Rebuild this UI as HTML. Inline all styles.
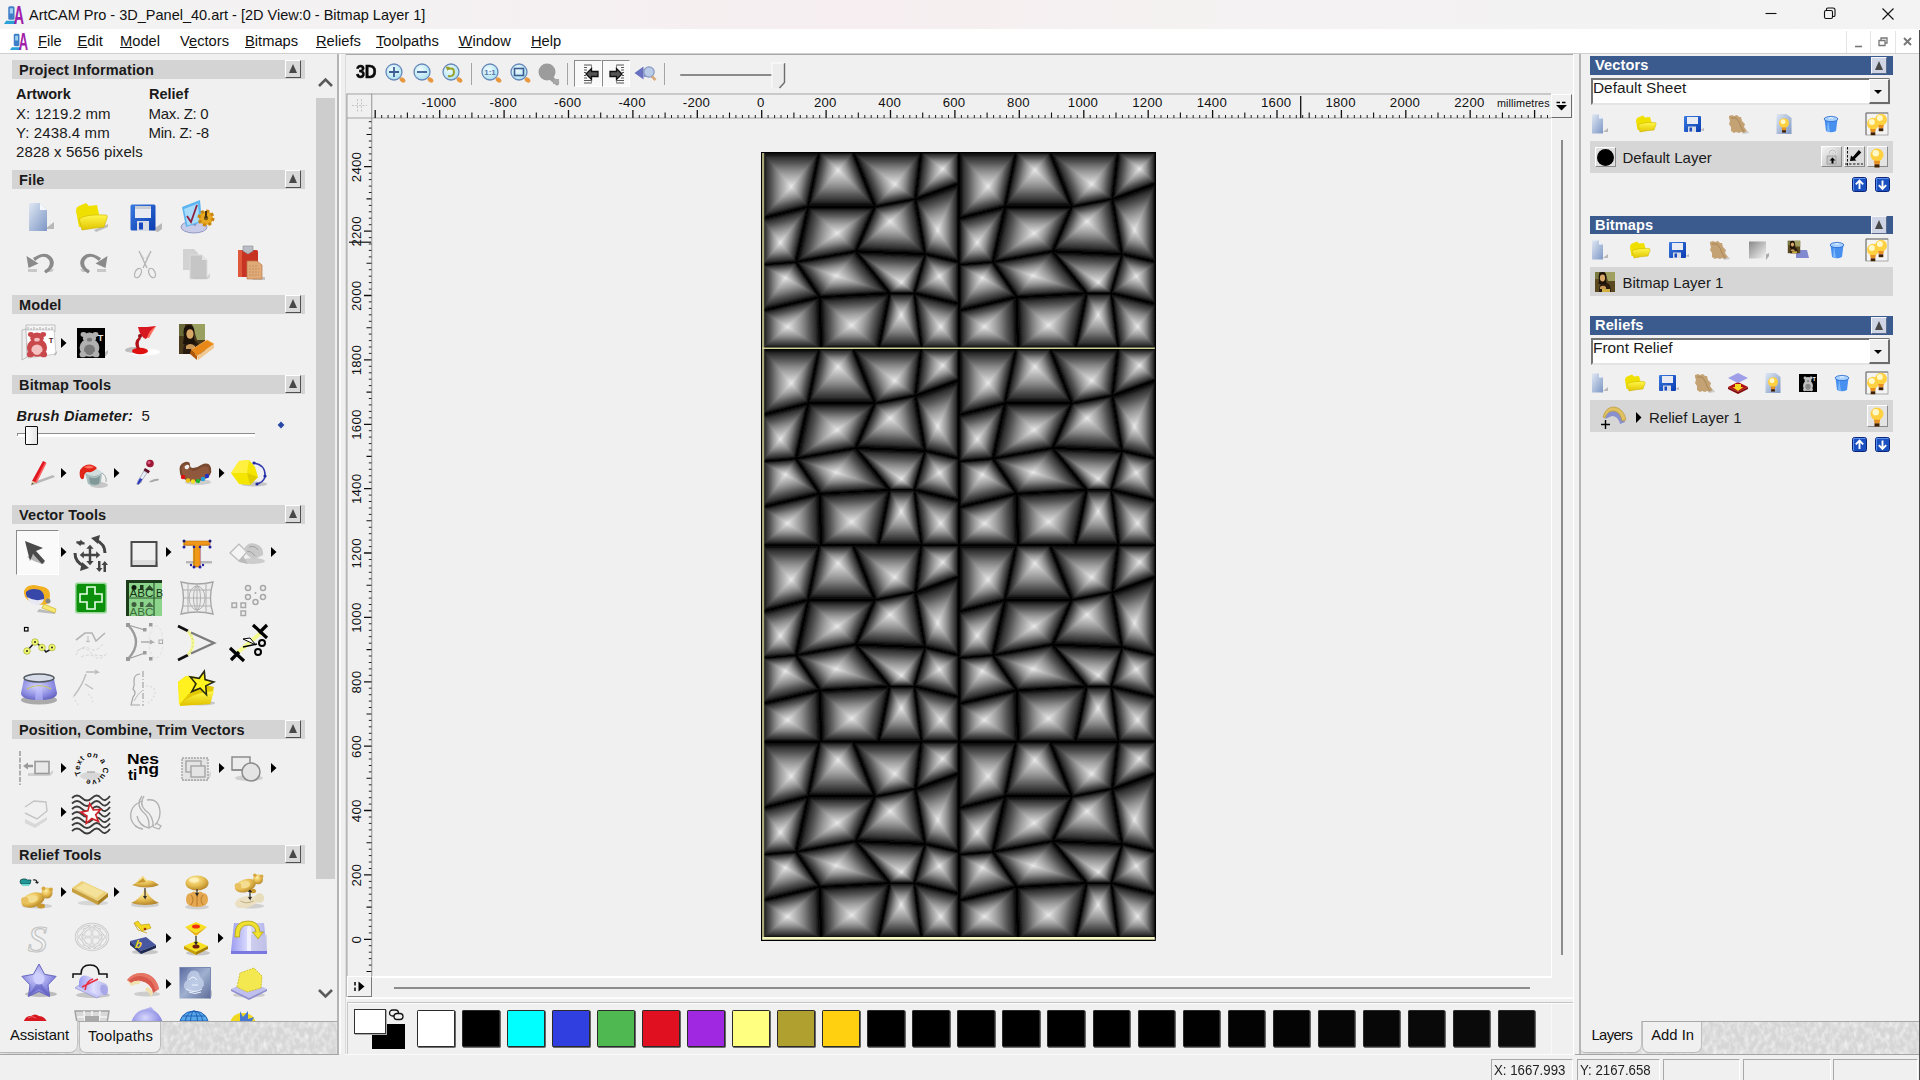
<!DOCTYPE html><html><head><meta charset="utf-8"><title>ArtCAM Pro - 3D_Panel_40.art</title><style>*{box-sizing:border-box;margin:0;padding:0}
html,body{width:1920px;height:1080px;overflow:hidden;background:#f0f0f0;font-family:"Liberation Sans",sans-serif;color:#1a1a1a}
.a{position:absolute}
.t{position:absolute;white-space:nowrap;line-height:1}
svg{position:absolute;overflow:visible}
.hd{position:absolute;left:12.3px;width:292.400px;height:18.500px;background:#d4d4d4}
.hd b{position:absolute;left:6.800px;top:2px;letter-spacing:.1px;font-size:14.5px;line-height:16px;color:#1a1a1a;white-space:nowrap}
.cb{position:absolute;width:16.4px;height:17.6px;background:#d9d9d9;border:1.4px solid;border-color:#fff #505050 #505050 #fff}
.cb:after{content:"";position:absolute;left:3px;top:3px;border:4.600px solid transparent;border-top:0;border-bottom:9.500px solid #484848}
.rh{position:absolute;left:1590px;width:303px;height:18.5px;background:#3b5b8e}
.rh b{position:absolute;left:5px;top:1px;letter-spacing:.1px;font-size:14.600px;line-height:16px;color:#fff;white-space:nowrap}
.row{position:absolute;left:1590px;width:303px;background:#d6d6d6}
.combo{position:absolute;left:1591px;width:298.5px;height:27px;background:#fff;border:2px solid;border-color:#747474 #e4e4e4 #e4e4e4 #747474}
.combo span{position:absolute;left:0px;top:0px;font-size:15.400px;line-height:16px;white-space:nowrap}
.combo i{position:absolute;right:-2px;top:-.5px;width:21px;height:25px;background:#f0f0f0;border:solid;border-width:1px 2px 2px 1px;border-color:#fff #6c6c6c #6c6c6c #fff}
.combo i:after{content:"";position:absolute;left:4.5px;top:10px;border:4.5px solid transparent;border-bottom:0;border-top:4.5px solid #000}
.sw{position:absolute;top:1010px;width:37.4px;height:37.2px;border:1.5px solid #2a2a2a;border-radius:1.2px;box-shadow:.8px .8px 0 #444}
.tri{position:absolute;width:0;height:0;border:4px solid transparent;border-right:0;border-left:5px solid #000}
.ud{position:absolute;width:15px;height:15px;background:#1a56c4;border:1px solid #0a2a80;border-radius:2px}

.rh .cb{background:#cfd5e4;border-color:#f4f6fa #5c6c8c #5c6c8c #f4f6fa}
</style></head><body>
<div class="a" style="left:0px;top:0px;width:1920px;height:29px;background:linear-gradient(90deg,#f3f3f3 0%,#f4f1f2 22%,#f6eef0 45%,#f4f2f2 65%,#f3f3f3 100%)"></div>
<div class="t " style="left:29px;top:7.53px;font-size:14.5px;color:#111">ArtCAM Pro - 3D_Panel_40.art - [2D View:0 - Bitmap Layer 1]</div>
<div class="a" style="left:0px;top:29px;width:1920px;height:24px;background:#fff"></div>
<div class="a" style="left:0px;top:53px;width:1920px;height:1px;background:#cfcfcf"></div>
<div class="t mn" style="left:38px;top:34.06px;font-size:14.7px;color:#111"><u>F</u>ile</div>
<div class="t mn" style="left:77.5px;top:34.06px;font-size:14.7px;color:#111"><u>E</u>dit</div>
<div class="t mn" style="left:120px;top:34.06px;font-size:14.7px;color:#111"><u>M</u>odel</div>
<div class="t mn" style="left:180px;top:34.06px;font-size:14.7px;color:#111">V<u>e</u>ctors</div>
<div class="t mn" style="left:245px;top:34.06px;font-size:14.7px;color:#111"><u>B</u>itmaps</div>
<div class="t mn" style="left:316px;top:34.06px;font-size:14.7px;color:#111"><u>R</u>eliefs</div>
<div class="t mn" style="left:376px;top:34.06px;font-size:14.7px;color:#111"><u>T</u>oolpaths</div>
<div class="t mn" style="left:458.5px;top:34.06px;font-size:14.7px;color:#111"><u>W</u>indow</div>
<div class="t mn" style="left:531px;top:34.06px;font-size:14.7px;color:#111"><u>H</u>elp</div>
<svg style="left:1750px;top:0" width="170" height="29" viewBox="0 0 170 29"><g stroke="#111" stroke-width="1.1" fill="none"><path d="M15.5 13.5h11"/><rect x="74.5" y="10.5" width="8" height="8" rx="1.5"/><path d="M76.5 10.5v-1.2a1.3 1.3 0 0 1 1.3-1.3h5.4a1.8 1.8 0 0 1 1.8 1.8v5.4a1.3 1.3 0 0 1-1.3 1.3h-1.2"/><path d="M132.5 8.5l11 11m0-11l-11 11"/></g></svg>
<div class="a" style="left:1846px;top:31px;width:74px;height:22px;background:#fff"></div>
<div class="a" style="left:1846px;top:31px;width:1px;height:22px;background:#e4e4e4"></div>
<div class="a" style="left:1870px;top:31px;width:1px;height:22px;background:#e4e4e4"></div>
<div class="a" style="left:1895px;top:31px;width:1px;height:22px;background:#e4e4e4"></div>
<svg style="left:1846px;top:31px" width="74" height="22" viewBox="0 0 74 22"><g stroke="#777" stroke-width="1.6" fill="none"><path d="M9 15.5h7"/><path d="M33 9.5h6v5h-6z M35 9.5v-2.500h6v5h-2" stroke-width="1.3"/><path d="M58 7l7 7m0-7l-7 7" stroke-width="1.9"/></g></svg>
<svg style="left:3px;top:3px" width="21.0" height="23.1" viewBox="0 0 20 22"><path d="M3 17h9l1 3H1z" fill="#2aa0d8"/><rect x="5" y="3" width="6" height="13" rx="1.5" fill="#3f7fc8"/><rect x="6.5" y="5" width="3" height="5" fill="#9fd0f0"/><text x="10.300" y="20" font-family="Liberation Sans,sans-serif" font-weight="bold" font-size="25" fill="#a020a8" textLength="9.800" lengthAdjust="spacingAndGlyphs">A</text></svg>
<svg style="left:9px;top:31px" width="19.0" height="20.9" viewBox="0 0 20 22"><path d="M3 17h9l1 3H1z" fill="#2aa0d8"/><rect x="5" y="3" width="6" height="13" rx="1.5" fill="#3f7fc8"/><rect x="6.5" y="5" width="3" height="5" fill="#9fd0f0"/><text x="10.300" y="20" font-family="Liberation Sans,sans-serif" font-weight="bold" font-size="25" fill="#a020a8" textLength="9.800" lengthAdjust="spacingAndGlyphs">A</text></svg>
<div class="a" id="lp" style="left:0;top:54px;width:337px;height:967px;overflow:hidden">
<div class="hd" style="top:6.100000000000001px"><b>Project Information</b><span class="cb" style="left:272.500px;top:0"></span></div>
<div class="hd" style="top:116.1px"><b>File</b><span class="cb" style="left:272.500px;top:0"></span></div>
<div class="hd" style="top:241.10000000000002px"><b>Model</b><span class="cb" style="left:272.500px;top:0"></span></div>
<div class="hd" style="top:321.3px"><b>Bitmap Tools</b><span class="cb" style="left:272.500px;top:0"></span></div>
<div class="hd" style="top:451.3px"><b>Vector Tools</b><span class="cb" style="left:272.500px;top:0"></span></div>
<div class="hd" style="top:666.3px"><b>Position, Combine, Trim Vectors</b><span class="cb" style="left:272.500px;top:0"></span></div>
<div class="hd" style="top:791.3px"><b>Relief Tools</b><span class="cb" style="left:272.500px;top:0"></span></div>
<div class="t " style="left:16px;top:33.43px;font-size:14.5px;font-weight:bold">Artwork</div>
<div class="t " style="left:149px;top:33.43px;font-size:14.5px;font-weight:bold">Relief</div>
<div class="t " style="left:16px;top:51.90px;font-size:15px;letter-spacing:.1px">X: 1219.2 mm</div>
<div class="t " style="left:16px;top:70.70px;font-size:15px;letter-spacing:.1px">Y: 2438.4 mm</div>
<div class="t " style="left:16px;top:89.50px;font-size:15px;letter-spacing:.1px">2828 x 5656 pixels</div>
<div class="t " style="left:148.5px;top:51.90px;font-size:15px;letter-spacing:-.3px">Max. Z: 0</div>
<div class="t " style="left:148.5px;top:70.70px;font-size:15px;letter-spacing:-.3px">Min. Z: -8</div>
<div class="t " style="left:16.5px;top:354.73px;font-size:14.5px;font-weight:bold;font-style:italic;letter-spacing:.25px">Brush Diameter:</div>
<div class="t " style="left:141.5px;top:354.30px;font-size:15px;">5</div>
<div class="a" style="left:17px;top:379px;width:238px;height:1px;background:#8c8c8c"></div>
<div class="a" style="left:17px;top:380px;width:238px;height:3px;background:#fff"></div>
<div class="a" style="left:17px;top:379px;width:1px;height:3px;background:#8c8c8c"></div>
<div class="a" style="left:25px;top:371.5px;width:12.5px;height:19px;background:linear-gradient(90deg,#fff,#e4e4e4);border:1.5px solid #111;border-radius:1px"></div>
<div class="a" style="left:277.5px;top:367.5px;width:6px;height:6px;background:#2848a8;transform:rotate(45deg) scale(.8)"></div>
<svg width="0" height="0" style="left:0;top:0"><defs>
<linearGradient id="gDoc" x1="0" y1="0" x2="1" y2="1"><stop offset="0" stop-color="#dfe7f3"/><stop offset="1" stop-color="#7d97c5"/></linearGradient>
<linearGradient id="gYel" x1="0" y1="0" x2="0" y2="1"><stop offset="0" stop-color="#fff84a"/><stop offset="1" stop-color="#e2c400"/></linearGradient>
<radialGradient id="gGold" cx=".4" cy=".3" r=".8"><stop offset="0" stop-color="#fff0a8"/><stop offset=".5" stop-color="#e6bc50"/><stop offset="1" stop-color="#a87820"/></radialGradient>
<radialGradient id="gLav" cx=".45" cy=".35" r=".8"><stop offset="0" stop-color="#d8d8ff"/><stop offset=".6" stop-color="#8888e0"/><stop offset="1" stop-color="#5050b0"/></radialGradient>
<linearGradient id="gLavL" x1="0" y1="0" x2="1" y2="0"><stop offset="0" stop-color="#9c9cf0"/><stop offset=".5" stop-color="#e0e0ff"/><stop offset="1" stop-color="#b0b0e8"/></linearGradient>
<radialGradient id="gSh" cx=".5" cy=".5" r=".5"><stop offset="0" stop-color="#777" stop-opacity=".7"/><stop offset="1" stop-color="#999" stop-opacity="0"/></radialGradient>
<linearGradient id="gSave" x1="0" y1="0" x2="1" y2="1"><stop offset="0" stop-color="#3a7ae0"/><stop offset="1" stop-color="#0a3cb0"/></linearGradient>
</defs></svg>
<svg style="left:19.0px;top:140.5px" width="44" height="44" viewBox="-22 -22 44 44"><path d="M4 12l9-7v7z" fill="#b8b8b8"/><path d="M-12-14h11l7 7v21h-18z" fill="url(#gDoc)"/><path d="M-1-14l7 7h-7z" fill="#f4f7fc"/></svg>
<svg style="left:70.0px;top:141.0px" width="44" height="44" viewBox="-22 -22 44 44"><path d="M2 13l14-6v3l-12 5z" fill="#bdbdbd"/><path d="M-16-6q0-4 3-5l7-3 3 3 8-1 2 9-3 13h-17z" fill="#f0e000"/><path d="M-13 2q6-5 27-4 2 0 1 3l-3 9q-10 1-22 3z" fill="url(#gYel)" stroke="#c8b000" stroke-width=".6"/></svg>
<svg style="left:124.0px;top:142.0px" width="44" height="44" viewBox="-22 -22 44 44"><path d="M6 12l10-7v6l-4 3z" fill="#b8b8b8"/><rect x="-15.500" y="-13.500" width="25" height="26" rx="1.500" fill="url(#gSave)"/><rect x="-11" y="-12" width="16" height="12" fill="#e8ecf2"/><rect x="-11" y="-12" width="16" height="3" fill="#c8ccd4"/><rect x="-9" y="3" width="12" height="10" fill="#d8dce4"/><rect x="-7" y="4.500" width="4" height="7" fill="#1848c0"/></svg>
<svg style="left:175.0px;top:141.0px" width="44" height="44" viewBox="-22 -22 44 44"><ellipse cx="-3" cy="10" rx="13" ry="6" fill="#c8cce8" stroke="#8088b8" stroke-width=".8"/><path d="M-5 8l4 1 3-14-4-1z" fill="#8890c0"/><path d="M-15-10l18-7 2 22-16 5z" fill="#5db4f0"/><path d="M-13-8l14-5.500 1.500 18-12 4z" fill="#a8dcfa"/><path d="M-10-1l4 6 6-17" fill="none" stroke="#902040" stroke-width="1.800"/><circle cx="9" cy="1" r="7" fill="#e8a820"/><circle cx="9" cy="1" r="7" fill="none" stroke="#c88410" stroke-width="3" stroke-dasharray="3 2.500"/><circle cx="9" cy="1" r="2.200" fill="#7a5a10"/><path d="M8-6h2v7h-2z" fill="#403010"/></svg>
<svg style="left:18.5px;top:187.0px" width="44" height="44" viewBox="-22 -22 44 44"><path d="M-13 6h9v3h-9z M4 6h9l-2 3h-7z" fill="#c8c8c8"/><path d="M-6-2q9-8 14-1 3 6-5 11l2 2.500q11-7 6.500-15-6-9-19.500-.5z" fill="#8a8a8a"/><path d="M-14.500-7l2 12 10-4.500z" fill="#8a8a8a"/></svg>
<svg style="left:70.5px;top:187.0px" width="44" height="44" viewBox="-22 -22 44 44"><g transform="scale(-1,1)"><path d="M-13 6h9v3h-9z M4 6h9l-2 3h-7z" fill="#c8c8c8"/><path d="M-6-2q9-8 14-1 3 6-5 11l2 2.500q11-7 6.500-15-6-9-19.500-.5z" fill="#8a8a8a"/><path d="M-14.500-7l2 12 10-4.500z" fill="#8a8a8a"/></g></svg>
<svg style="left:122.5px;top:187.5px" width="44" height="44" viewBox="-22 -22 44 44"><g fill="none" stroke="#b4b4b4" stroke-width="1.300"><path d="M-6-13l8 17M6-13l-8 17"/><ellipse cx="-7" cy="9" rx="3" ry="5" transform="rotate(25 -7 9)"/><ellipse cx="7" cy="9" rx="3" ry="5" transform="rotate(-25 7 9)"/></g><path d="M-5.500-13l4 9 .8-1.500z M5.500-13l-4 9-.8-1.500z" fill="#c8c8c8"/></svg>
<svg style="left:175.0px;top:186.5px" width="44" height="44" viewBox="-22 -22 44 44"><path d="M-14-14h11l4 4v17h-15z" fill="#d2d2d2"/><path d="M-7-8h12l5 5v19h-17z" fill="#c6c6c6" stroke="#dcdcdc" stroke-width="1"/><path d="M5-8l5 5h-5z" fill="#e4e4e4"/><path d="M-5 14h15l3-4v4l-2 2h-14z" fill="#c0c0c0" opacity=".6"/></svg>
<svg style="left:229.0px;top:186.5px" width="44" height="44" viewBox="-22 -22 44 44"><path d="M0 14h14v3h-12z" fill="#b0b0b0" opacity=".7"/><rect x="-13" y="-13" width="20" height="27" rx="1.500" fill="#c83424"/><path d="M-13-13h4v27h-4z" fill="#e0583c"/><path d="M-8-17h10v5l-5 3-5-3z" fill="#b8bcc4" stroke="#8a8e96" stroke-width=".6"/><path d="M-4-2h10l5 4v14h-15z" fill="#e0aa78"/><path d="M-4-2h10l5 4v14h-15z" fill="none" stroke="#b87848" stroke-width=".7"/><path d="M-2 3h8m-8 3h10m-10 3h10m-10 3h10" stroke="#c08858" stroke-width=".8" stroke-dasharray="2 1"/></svg>
<svg style="left:15.5px;top:266.0px" width="44" height="44" viewBox="-22 -22 44 44"><path d="M-12-17h29v7h-29z" fill="#f4f4f4" stroke="#aaa" stroke-width=".7"/><path d="M-10-12v-3m3 3v-2m3 2v-3m3 3v-2m3 2v-3m3 3v-2m3 2v-3m3 3v-2m3 2v-3" stroke="#888" stroke-width=".7"/><path d="M-16-12l4-1 1 28-5 3z" fill="#eee" stroke="#aaa" stroke-width=".7"/><path d="M-12-12h28l2 24-28 4z" fill="#fff" stroke="#bbb" stroke-width=".7"/><path d="M16 12l3-3v2l-2 3z" fill="#bbb"/><g transform="translate(-1,1) scale(1.120,.95)"><circle cx="-5.500" cy="-9" r="2.600" fill="#c8484c"/><circle cx="5.500" cy="-9" r="2.600" fill="#c8484c"/><circle cx="0" cy="-5" r="6" fill="#c8484c"/><ellipse cx="0" cy="5" rx="9" ry="9.500" fill="#c8484c"/><ellipse cx="0" cy="7" rx="5" ry="5.500" fill="#f4c0c0"/><circle cx="-6" cy="12" r="3" fill="#c8484c"/><circle cx="6" cy="12" r="3" fill="#c8484c"/><ellipse cx="0" cy="-3.500" rx="2.500" ry="2" fill="#f4c0c0"/></g><text x="10.800" y="0.500" font-family="Liberation Sans,sans-serif" font-weight="bold" font-size="7.500" fill="#5a2020">T</text></svg>
<svg style="left:61px;top:284.0px" width="6" height="10" viewBox="0 0 6 10"><path d="M0 0l5.500 5L0 10z" fill="#000"/></svg>
<svg style="left:69.0px;top:266.5px" width="44" height="44" viewBox="-22 -22 44 44"><path d="M13 10l4-3v3l-3 4z" fill="#bbb"/><rect x="-14" y="-15" width="28" height="30" fill="#000"/><g transform="translate(-1.500,0) scale(1.100,.95)"><circle cx="-5.500" cy="-9" r="2.600" fill="#b0b0b0"/><circle cx="5.500" cy="-9" r="2.600" fill="#b0b0b0"/><circle cx="0" cy="-5" r="6" fill="#b0b0b0"/><ellipse cx="0" cy="5" rx="9" ry="9.500" fill="#b0b0b0"/><ellipse cx="0" cy="7" rx="5" ry="5.500" fill="#787878"/><circle cx="-6" cy="12" r="3" fill="#b0b0b0"/><circle cx="6" cy="12" r="3" fill="#b0b0b0"/><ellipse cx="0" cy="-3.500" rx="2.500" ry="2" fill="#787878"/></g><text x="6.800" y="-2.500" font-family="Liberation Sans,sans-serif" font-weight="bold" font-size="9" fill="#e8e8e8">T</text></svg>
<svg style="left:120.0px;top:264.0px" width="44" height="44" viewBox="-22 -22 44 44"><ellipse cx="2" cy="12" rx="16" ry="3.500" fill="#fff" opacity=".9"/><ellipse cx="-8" cy="10" rx="9" ry="3" fill="#888" opacity=".5"/><ellipse cx="-2" cy="11" rx="8" ry="3.200" fill="#e01010"/><path d="M-5 9q-4-7 2-12l2 1.500q-4 4-1 10z" fill="#b01018"/><path d="M-4-13l9 0 9-1-10 13q-6-2-8-12z" fill="#d81820"/><path d="M5-2q2-8 9-12l-7 12z" fill="#ff7060"/><circle cx="-2" cy="-4" r="2" fill="#901018"/></svg>
<svg style="left:174.0px;top:266.0px" width="44" height="44" viewBox="-22 -22 44 44"><rect x="-17" y="-18" width="26" height="30" fill="#4a3a1c"/><path d="M-4-18h13v16h-8z" fill="#9aa060"/><path d="M-17-18h6v12h-6z" fill="#6a6a38"/><path d="M-13 12q0-12 5-14 2-1 6 0 6 2 6 14z" fill="#2a1c10"/><path d="M-12-5q-2-12 5-12 7 0 5 12l1 7h-12z" fill="#1c1208"/><ellipse cx="-6" cy="-8" rx="3.600" ry="4.800" fill="#d8a868"/><path d="M-10 4q4-4 9 0v3h-9z" fill="#c89858"/><path d="M-5 8l16-10 7 4-17 12z" fill="#e88818"/><path d="M-5 8l6 6v4l-7-6z" fill="#b05808"/><path d="M1 14l17-12v4l-16 12z" fill="#f0c890"/><path d="M-5 8l16-10 7 4" fill="none" stroke="#f8b050" stroke-width=".8"/></svg>
<svg style="left:20.0px;top:397.0px" width="44" height="44" viewBox="-22 -22 44 44"><path d="M-11 10l22-8 2 2-22 8z" fill="#b8b8b8"/><path d="M-10 8l11-20 3 1.500-10 20z" fill="#e01820"/><path d="M-7 9.500l10-20 1.500.7-10 20z" fill="#ff6060"/><path d="M-10 8l4 1.500-5 3z" fill="#d8c090"/><path d="M-11 12.500l1.500-2.500 1 .5z" fill="#333"/></svg>
<svg style="left:61px;top:414.0px" width="6" height="10" viewBox="0 0 6 10"><path d="M0 0l5.500 5L0 10z" fill="#000"/></svg>
<svg style="left:71.0px;top:399.0px" width="44" height="44" viewBox="-22 -22 44 44"><ellipse cx="6" cy="10" rx="9" ry="3" fill="#aaa" opacity=".6"/><path d="M-8-2q10-8 17 0l-1 10q-6 5-13 1z" fill="#a8bcbc"/><path d="M-8-2q10-8 17 0-8 6-17 0z" fill="#d0dede"/><path d="M-3 8q3 3 9 1l1-8q-5 4-11 1z" fill="#809898"/><path d="M-13 2q-2-9 6-12 6-2 11 3-4 5-10 4-3 1-3 6-2 3-4-1z" fill="#e02418"/><path d="M-9-8q5-3 10 0-5 3-10 0z" fill="#ff7060"/><path d="M9-2q5 3 4 9" fill="none" stroke="#9aa" stroke-width="1"/></svg>
<svg style="left:113.5px;top:414.0px" width="6" height="10" viewBox="0 0 6 10"><path d="M0 0l5.500 5L0 10z" fill="#000"/></svg>
<svg style="left:125.0px;top:397.0px" width="44" height="44" viewBox="-22 -22 44 44"><path d="M3 8q5-3 9-2 0 2-4 2-3 2-6 1z" fill="#aaa"/><path d="M-11 11l5-3 1 1-4 3z" fill="#999"/><circle cx="3" cy="-9.500" r="3.800" fill="#a01838"/><circle cx="2" cy="-10.500" r="1.500" fill="#d86080"/><path d="M-2-5l5 3-1.500 2.500-5-3z" fill="#601028"/><path d="M-3-2l3 2-7 10-2.500-1.500z" fill="#e8eef8" stroke="#889" stroke-width=".6"/><path d="M-7 5l2.500 1.500-4 5-1.500-1z" fill="#2838c0"/></svg>
<svg style="left:173.0px;top:397.0px" width="44" height="44" viewBox="-22 -22 44 44"><ellipse cx="3" cy="9" rx="13" ry="3" fill="#aaa" opacity=".5"/><path d="M-15 0q-2-9 5-11 5-1 5 3 0 3 3 3 4 0 8-3 8-4 10 3 2 8-8 12-12 4-19-1-4-3-4-6z" fill="#7a4a30"/><path d="M-13-1q-1-7 4-8 3 0 3 3 1 4 5 4 4-1 8-4 6-2 7 3 1 6-7 9-11 3-17-1-3-3-3-6z" fill="#90583c"/><ellipse cx="-8" cy="-6" rx="2.500" ry="2" fill="#f0f0f0" transform="rotate(-30 -8 -6)"/><circle cx="-12" cy="4" r="2.200" fill="#e01010"/><circle cx="-7" cy="7.500" r="2.200" fill="#f0c010"/><circle cx="-2" cy="8.500" r="2.200" fill="#f0e020"/><circle cx="3" cy="8" r="2.200" fill="#20b030"/><circle cx="8" cy="6" r="2.200" fill="#20a0e0"/><circle cx="12" cy="3" r="2.200" fill="#2030c0"/></svg>
<svg style="left:218.5px;top:414.0px" width="6" height="10" viewBox="0 0 6 10"><path d="M0 0l5.500 5L0 10z" fill="#000"/></svg>
<svg style="left:227.0px;top:396.5px" width="44" height="44" viewBox="-22 -22 44 44"><ellipse cx="5" cy="11" rx="13" ry="2.500" fill="#aaa" opacity=".6"/><path d="M5-10q12 2 11 14-2 6-9 7" fill="none" stroke="#3038b0" stroke-width="1.500"/><circle cx="5" cy="-10" r="1.600" fill="#2028a0"/><circle cx="16" cy="3" r="1.600" fill="#2028a0"/><circle cx="8" cy="11" r="1.600" fill="#2028a0"/><path d="M-18 0l8-12 10-1 6 7 3 10-8 8-11-1z" fill="#f4e600"/><path d="M-18 0l8-12 10-1-2 13z" fill="#fff040"/><path d="M-2 0l11 4-8 8z" fill="#e0cc00"/></svg>
<div class="a" style="left:16px;top:476px;width:43px;height:45px;background:#fafafa;border:1px solid;border-color:#8a8a8a #fff #fff #8a8a8a"></div>
<svg style="left:14.0px;top:476.0px" width="44" height="44" viewBox="-22 -22 44 44"><path d="M-9 5l8-3 2 4 8 5-3 1-8-3z" fill="#b4b4b4"/><path d="M-11-11l18 7-7 3 9 10-3 3-9-10-3 7z" fill="#4a4a4a"/></svg>
<svg style="left:61px;top:493.0px" width="6" height="10" viewBox="0 0 6 10"><path d="M0 0l5.500 5L0 10z" fill="#000"/></svg>
<svg style="left:68.0px;top:477.0px" width="44" height="44" viewBox="-22 -22 44 44"><g fill="none" stroke="#444" stroke-width="3"><path d="M6-13q9 4 9 13"/><path d="M-15 0q0 9 9 13"/></g><path d="M1-15l9-3-2 9z" fill="#444"/><path d="M-1 15l-9 3 2-9z" fill="#444"/><g fill="#444"><path d="M-2-11l5 0 0-2 4 3.500-4 3.500v-2h-5z" transform="translate(-12,-3) scale(.8)"/><path d="M-2-11l5 0 0-2 4 3.500-4 3.500v-2h-5z" transform="translate(-7,-2) scale(-.8,.8)"/><path d="M0-12l4.500 5h-3v6h6v-3l5 4.500-5 4.500v-3h-6v6h3l-4.500 5-4.500-5h3v-6h-6v3l-5-4.500 5-4.500v3h6v-6h-3z" transform="translate(0,1.500) scale(.82)"/><path d="M8 8h2.500v7h2l-3.200 4-3.300-4h2z M13.500 19h2.500v-7h2l-3.200-4-3.300 4h2z"/></g></svg>
<svg style="left:121.5px;top:477.5px" width="44" height="44" viewBox="-22 -22 44 44"><path d="M-10 8h24v5h-24z" fill="#c4c4c4"/><rect x="-12.500" y="-12" width="25" height="24" fill="none" stroke="#4a4a4a" stroke-width="2"/><path d="M-11 6h22v5h-22z" fill="#dcdcdc"/></svg>
<svg style="left:166px;top:493.0px" width="6" height="10" viewBox="0 0 6 10"><path d="M0 0l5.500 5L0 10z" fill="#000"/></svg>
<svg style="left:175.0px;top:477.7px" width="44" height="44" viewBox="-22 -22 44 44"><path d="M-11 7h26v2.500h-26z" fill="#b8b8b8"/><text x="0" y="13" text-anchor="middle" font-family="Liberation Sans,sans-serif" font-weight="bold" font-size="36.500" fill="#f09818" stroke="#b86808" stroke-width=".7" textLength="27" lengthAdjust="spacingAndGlyphs">T</text><g fill="#2020a0"><circle cx="-13" cy="-13" r="1.500"/><circle cx="13" cy="-13" r="1.500"/><circle cx="-13" cy="-7" r="1.500"/><circle cx="13" cy="-7" r="1.500"/><circle cx="-3" cy="-7" r="1.300"/><circle cx="3" cy="-7" r="1.300"/><circle cx="-3" cy="13" r="1.500"/><circle cx="3" cy="13" r="1.500"/><circle cx="-6" cy="11" r="1.200"/><circle cx="6" cy="11" r="1.200"/></g><g fill="#111"><circle cx="-13" cy="-13" r=".8"/><circle cx="13" cy="-13" r=".8"/></g></svg>
<svg style="left:224.6px;top:476.8px" width="44" height="44" viewBox="-22 -22 44 44"><ellipse cx="6" cy="8" rx="12" ry="3" fill="#ccc"/><path d="M-17 0l9-9 8 8-8 9z" fill="#f4f4f4" stroke="#b8b8b8" stroke-width="1.200"/><path d="M-3-4q4-8 12-5 8 3 7 11l-8 4q-8-1-11-10z" fill="#c8c8c8"/><path d="M2-6q6-2 9 3M0-2q5 0 8 5" stroke="#a0a0a0" fill="none"/><path d="M-4 3l5 8-9-2z" fill="#bbb"/></svg>
<svg style="left:271px;top:493.0px" width="6" height="10" viewBox="0 0 6 10"><path d="M0 0l5.500 5L0 10z" fill="#000"/></svg>
<svg style="left:16.8px;top:522.7px" width="44" height="44" viewBox="-22 -22 44 44"><path d="M0 10l16 3v2l-18-2z" fill="#bbb"/><path d="M-15-8q2-6 10-6l10 2q6 2 6 8l-1 8q-8 4-18-1-8-4-7-11z" fill="#f0b020"/><path d="M-13-7q5-5 14-2 5 3 4 10-6 3-13 0-6-3-5-8z" fill="#3848a8"/><path d="M-12-2q8 5 17 2-1 5-6 6-8 0-11-8z" fill="#e8e8f4"/><path d="M5 5l12 5-1 4-13-5z" fill="#f8e870" stroke="#c8a820" stroke-width=".6"/><circle cx="9" cy="2" r="2.500" fill="#888"/></svg>
<svg style="left:69.0px;top:521.6px" width="44" height="44" viewBox="-22 -22 44 44"><rect x="-16" y="-15.500" width="32" height="31" rx="2.500" fill="#98d898"/><rect x="-14.500" y="-14" width="29" height="28" rx="2" fill="#0c900c"/><path d="M-4-11h8v7h7v8h-7v7h-8v-7h-7v-8h7z" fill="none" stroke="#e8ffe8" stroke-width="1.600"/></svg>
<svg style="left:122.0px;top:522.0px" width="44" height="44" viewBox="-22 -22 44 44"><rect x="-18" y="-18" width="36" height="36" fill="#8cd48c"/><path d="M-18-18h36v3h-33v33h-3z" fill="#1c3c1c"/><path d="M-15 0h33M10-15v33" stroke="#2c5c2c" stroke-width="1.200"/><circle cx="-10" cy="-10.500" r="2.500" fill="#0c1c0c"/><rect x="-4" y="-13" width="3.500" height="5" fill="#1c3c1c"/><path d="M1-8l4.500-5 4.500 5z" fill="#2c4c2c"/><text x="-14.500" y="-1.500" font-family="Liberation Sans,sans-serif" font-size="10.500" fill="#143414" textLength="24" lengthAdjust="spacingAndGlyphs">ABC</text><circle cx="-10" cy="6.500" r="2.500" fill="#3c5c3c"/><rect x="-4" y="4" width="3.500" height="5" fill="#3c5c3c"/><path d="M1 9l4.500-5 4.500 5z" fill="#4c6c4c"/><text x="-14.500" y="18" font-family="Liberation Sans,sans-serif" font-size="10.500" fill="#3c6c3c" textLength="24" lengthAdjust="spacingAndGlyphs">ABC</text><text x="12" y="-1.500" font-family="Liberation Sans,sans-serif" font-size="10.500" fill="#143414">B</text></svg>
<svg style="left:174.7px;top:521.6px" width="44" height="44" viewBox="-22 -22 44 44"><path d="M-16-16q16 4 32 0-5 16 0 32-16-4-32 0 5-16 0-32z" fill="#ececec" stroke="#a4a4a4" stroke-width="1.300"/><g fill="none" stroke="#b0b0b0" stroke-width="1"><ellipse cx="0" cy="0" rx="8" ry="12"/><ellipse cx="0" cy="0" rx="3.500" ry="12"/><path d="M-14-8h28M-13 0h26M-14 8h28M-9-15v30M9-15v30M0-14v28"/></g></svg>
<svg style="left:226.7px;top:524.0px" width="44" height="44" viewBox="-22 -22 44 44"><g fill="none" stroke="#a8a8a8" stroke-width="1.500"><rect x="-17" y="3" width="4.500" height="4.500"/><rect x="-8" y="3" width="4.500" height="4.500"/><rect x="-8" y="11" width="4.500" height="4.500"/><circle cx="-1" cy="-12" r="2.500"/><circle cx="14" cy="-12" r="2.500"/><circle cx="-1" cy="-3" r="2.500"/><circle cx="14" cy="-3" r="2.500"/><circle cx="6.500" cy="2" r="2.500"/></g><circle cx="6.500" cy="-7" r="1" fill="#a8a8a8"/></svg>
<svg style="left:18.0px;top:566.0px" width="44" height="44" viewBox="-22 -22 44 44"><rect x="-15.500" y="-14.500" width="3.500" height="3.500" fill="#fff" stroke="#000" stroke-width="1.200"/><path d="M-13 9l8-9 7 5 4 5 7-4" fill="none" stroke="#222" stroke-width="1.600"/><g fill="#f0f870" stroke="#a8b030" stroke-width=".7"><circle cx="-13" cy="9" r="3.300"/><circle cx="-5" cy="0" r="3.300"/><circle cx="2" cy="5.500" r="3.300"/><circle cx="12" cy="5.500" r="3.300"/></g><g fill="#222"><circle cx="-13" cy="9" r="1"/><circle cx="-5" cy="0" r="1"/><circle cx="2" cy="5.500" r="1"/><circle cx="12" cy="5.500" r="1"/></g></svg>
<svg style="left:69.0px;top:569.0px" width="44" height="44" viewBox="-22 -22 44 44"><path d="M-15-5l9-7 7 0 4 8 9-8" fill="none" stroke="#b4b4b4" stroke-width="1.600"/><path d="M-3-9v6l-2-1m2 1l2-1" stroke="#bbb" fill="none"/><g fill="none" stroke="#d4d4d4" stroke-width="1" stroke-dasharray="3 2"><path d="M-15 10q6-12 14-6 6 4 14-6"/><path d="M-14 6q8-6 14 2 6 4 14 2"/><path d="M-10 12q8-4 14 0t12-4"/></g></svg>
<svg style="left:121.5px;top:566.0px" width="44" height="44" viewBox="-22 -22 44 44"><ellipse cx="12" cy="0" rx="7" ry="16" fill="none" stroke="#e0e0e0" stroke-width="1" stroke-dasharray="3 2"/><path d="M-16-17q16 17 0 34" fill="none" stroke="#9a9a9a" stroke-width="2.300"/><path d="M-16-17l17 5M-16 17l17-6" stroke="#9a9a9a" stroke-width="1.200"/><path d="M-3 0h12l-3-2m3 2l-3 2" stroke="#aaa" stroke-width="1.300" fill="none"/><g fill="#9a9a9a"><rect x="-18" y="-19" width="4" height="4"/><rect x="-18" y="15" width="4" height="4"/><rect x="-1" y="-14" width="3.500" height="3.500"/><rect x="-1" y="9" width="3.500" height="3.500"/><rect x="5" y="-19" width="3.500" height="3.500"/><rect x="5" y="15" width="3.500" height="3.500"/></g><rect x="15" y="-2" width="3.500" height="3.500" fill="none" stroke="#aaa"/></svg>
<svg style="left:174.0px;top:566.5px" width="44" height="44" viewBox="-22 -22 44 44"><path d="M-18-17l10 5M-18 17l10-5" stroke="#111" stroke-width="2.600"/><path d="M-8-12q10 12 0 24" fill="none" stroke="#f4fa90" stroke-width="3"/><path d="M-8-12q10 12 0 24" fill="none" stroke="#c8c8a0" stroke-width=".8" stroke-dasharray="2 2"/><path d="M-5-10.500l23 10.500-23 10.500" fill="none" stroke="#7c7c7c" stroke-width="2.300"/></svg>
<svg style="left:226.7px;top:566.5px" width="44" height="44" viewBox="-22 -22 44 44"><path d="M-12 10l25-21" stroke="#f4fa90" stroke-width="4"/><g stroke="#000" stroke-width="3.200"><path d="M4-18l14 13M18-18l-8 8"/><path d="M-19 5l14 13M-18 17l8-8"/></g><path d="M-6-4l7-1 6 7z" fill="#fff" stroke="#000" stroke-width="1"/><path d="M-6 4l14-3" stroke="#000" stroke-width="1.300"/><g fill="none" stroke="#000" stroke-width="2"><circle cx="13" cy="0" r="3"/><circle cx="9" cy="9" r="3"/></g></svg>
<svg style="left:17.0px;top:612.0px" width="44" height="44" viewBox="-22 -22 44 44"><ellipse cx="0" cy="12" rx="18" ry="4.500" fill="#999" opacity=".8"/><path d="M-15-9l-3 14q0 7 18 7t18-7l-3-14z" fill="url(#gLav)"/><path d="M-2-10h4l2 22h-8z" fill="#c0c0ff" opacity=".6"/><ellipse cx="0" cy="-10" rx="15" ry="4" fill="#d8dce8" stroke="#505860" stroke-width="1.500"/><path d="M-12 1q12-7 24 0" fill="none" stroke="#c8c860" stroke-width="1.200"/></svg>
<svg style="left:66.0px;top:612.0px" width="44" height="44" viewBox="-22 -22 44 44"><g fill="none" stroke="#bcbcbc" stroke-width="1.400"><path d="M-14 8q8-10 12-22"/><path d="M-2-16h12l-3-2m3 2l-3 2"/><path d="M-3-4l8 5"/></g><g fill="none" stroke="#dcdcdc" stroke-width="1.200" stroke-dasharray="2 2"><path d="M-15 8q3 6 6 10M0 6q6 4 4 10"/></g></svg>
<svg style="left:121.0px;top:612.0px" width="44" height="44" viewBox="-22 -22 44 44"><path d="M0-17v35" stroke="#a4a4a4" stroke-width="1.200" stroke-dasharray="6 2 1 2"/><path d="M-3-14q-6 0-6 7 1 4-1 8 4 4 0 8l-2 8h9" fill="none" stroke="#a8a8a8" stroke-width="1.200"/><path d="M-9 13q4-8 8-10" fill="none" stroke="#bbb"/><path d="M3-2q10 0 9 8-2 6-8 10" fill="none" stroke="#dcdcdc" stroke-width="1.200" stroke-dasharray="2 2"/></svg>
<svg style="left:174.0px;top:611.6px" width="44" height="44" viewBox="-22 -22 44 44"><ellipse cx="4" cy="15" rx="15" ry="2.500" fill="#aaa" opacity=".6"/><path d="M-18-6l8-6 10 1 2 6 16 4-4 17-30 2z" fill="#e4c800"/><path d="M-18-6l8-6 10 1-3 12-14 16z" fill="#fff020"/><path d="M-16 17q10-12 34-14l-4 13z" fill="url(#gYel)"/><path d="M6-17l2.500 8 9 .5-7 5.500 2.500 8.500-7.500-5-7.500 5 2.500-8.500-7-5.500 9-.5z" fill="#fff420" stroke="#2a2a10" stroke-width="1.600" transform="rotate(12 6 -6)"/></svg>
<svg style="left:14.0px;top:692.0px" width="44" height="44" viewBox="-22 -22 44 44"><path d="M-16-17v34" stroke="#8c8c8c" stroke-width="1.300" stroke-dasharray="5 1.500"/><path d="M-8 5h22l3-3v3l-3 3h-22z" fill="#d0d0d0"/><path d="M-13-2l5-3.500v2.300h5v2.400h-5v2.300z" fill="#9a9a9a"/><rect x="-1" y="-6.500" width="14" height="12" fill="#e8e8e8" stroke="#9a9a9a" stroke-width="1.600"/></svg>
<svg style="left:61px;top:709.0px" width="6" height="10" viewBox="0 0 6 10"><path d="M0 0l5.500 5L0 10z" fill="#000"/></svg>
<svg style="left:69.0px;top:691.5px" width="44" height="44" viewBox="-22 -22 44 44"><defs><path id="tcp" d="M-9.500 6.500a11.500 11.500 0 1 1 4 4"/></defs><ellipse cx="0" cy="8" rx="11" ry="4" fill="#ccc" opacity=".7"/><text font-family="Liberation Sans,sans-serif" font-weight="bold" font-size="7.800" fill="#111" letter-spacing=".45"><textPath href="#tcp">Text on a Curve</textPath></text><path d="M-4 4h8" stroke="#999" stroke-width="1"/></svg>
<svg style="left:121.5px;top:691.0px" width="44" height="44" viewBox="-22 -22 44 44"><g font-family="Liberation Sans,sans-serif" font-weight="bold" fill="#000"><text x="-17" y="-3" font-size="15" textLength="32" lengthAdjust="spacingAndGlyphs">Nes</text><text x="-16" y="13" font-size="15">ti</text><text x="-6" y="6.500" font-size="15" textLength="21" lengthAdjust="spacingAndGlyphs">ng</text></g></svg>
<svg style="left:173.0px;top:692.7px" width="44" height="44" viewBox="-22 -22 44 44"><path d="M-12 6h24l4-4v5l-4 5h-24z" fill="#d8d8d8"/><g fill="#e4e4e4" stroke="#a4a4a4" stroke-width="1.400"><rect x="-13" y="-11" width="26" height="22" stroke-dasharray="2 1"/><rect x="-9" y="-8" width="15" height="11"/><rect x="-4" y="-3" width="14" height="11"/></g></svg>
<svg style="left:218.5px;top:709.0px" width="6" height="10" viewBox="0 0 6 10"><path d="M0 0l5.500 5L0 10z" fill="#000"/></svg>
<svg style="left:223.5px;top:693.0px" width="44" height="44" viewBox="-22 -22 44 44"><ellipse cx="3" cy="9" rx="14" ry="3" fill="#d0d0d0"/><rect x="-14" y="-12" width="18" height="13" fill="#ececec" stroke="#8c8c8c" stroke-width="1.500"/><circle cx="5" cy="3" r="9" fill="#e4e4e4" stroke="#8c8c8c" stroke-width="1.500"/><path d="M-14 1h10" stroke="#8c8c8c" stroke-width="1.500"/></svg>
<svg style="left:271px;top:709.0px" width="6" height="10" viewBox="0 0 6 10"><path d="M0 0l5.500 5L0 10z" fill="#000"/></svg>
<svg style="left:15.0px;top:736.0px" width="44" height="44" viewBox="-22 -22 44 44"><path d="M-12-5l9-6 12 1 1 9-10 8-12-6" fill="none" stroke="#c4c4c4" stroke-width="1.400"/><path d="M-12 7l10 5 12-7v3l-12 8-10-5z" fill="#d8d8d8"/></svg>
<svg style="left:61px;top:753.0px" width="6" height="10" viewBox="0 0 6 10"><path d="M0 0l5.500 5L0 10z" fill="#000"/></svg>
<svg style="left:69.3px;top:736.5px" width="44" height="44" viewBox="-22 -22 44 44"><path d="M-19 -15q5-5 10 0t10 0 9 0 9-2" fill="none" stroke="#3c3c3c" stroke-width="1.800"/><path d="M-19 -9.5q5-5 10 0t10 0 9 0 9-2" fill="none" stroke="#3c3c3c" stroke-width="1.800"/><path d="M-19 -4q5-5 10 0t10 0 9 0 9-2" fill="none" stroke="#3c3c3c" stroke-width="1.800"/><path d="M-19 1.5q5-5 10 0t10 0 9 0 9-2" fill="none" stroke="#3c3c3c" stroke-width="1.800"/><path d="M-19 7q5-5 10 0t10 0 9 0 9-2" fill="none" stroke="#3c3c3c" stroke-width="1.800"/><path d="M-19 12.5q5-5 10 0t10 0 9 0 9-2" fill="none" stroke="#3c3c3c" stroke-width="1.800"/><path d="M-19 18q5-5 10 0t10 0 9 0 9-2" fill="none" stroke="#3c3c3c" stroke-width="1.800"/><path d="M0.0 -9.5L2.7 -2.7L10.0 -2.2L4.4 2.4L6.2 9.5L0.0 5.6L-6.2 9.5L-4.4 2.4L-10.0 -2.2L-2.7 -2.7z" transform="rotate(-8)" fill="#fff" stroke="#d02028" stroke-width="1.600"/></svg>
<svg style="left:122.5px;top:736.5px" width="44" height="44" viewBox="-22 -22 44 44"><g fill="none" stroke="#b0b0b0" stroke-width="1.300"><path d="M-3-17q-6 8 0 15 8 6 7 16"/><path d="M-1-17q-5 8 1 14 9 6 8 17"/><path d="M-2-12q-14 4-12 18 3 9 12 10"/><path d="M2-13q12-2 13 12 0 8-5 13"/><path d="M-8 3q2 10 12 12l5-3"/><path d="M8 14l6 2 2-3-5-3"/></g></svg>
<svg style="left:15.4px;top:816.5px" width="44" height="44" viewBox="-22 -22 44 44"><ellipse cx="0" cy="13" rx="15" ry="2.500" fill="#bbb" opacity=".6"/><g transform="translate(0,4)"><ellipse cx="-4" cy="3" rx="12" ry="7" fill="url(#gGold)" transform="rotate(-18 -4 3)"/><circle cx="10" cy="-4" r="5.500" fill="url(#gGold)"/><circle cx="6.500" cy="-8.500" r="2" fill="#d8a840"/><circle cx="14" cy="-7.500" r="2" fill="#d8a840"/><ellipse cx="-12" cy="3" rx="4" ry="3" fill="#e8c060"/><ellipse cx="4" cy="9" rx="4" ry="2.500" fill="#c89830"/><ellipse cx="-4" cy="2" rx="5" ry="3.500" fill="#f4dc90" transform="rotate(-18 -4 2)"/></g><path d="M-17-11q0-3 3-3l3 0 1 1 4 0-1 4h-9z" fill="#209898" stroke="#104848" stroke-width=".8"/><path d="M-15-9h8l-1 2h-7z" fill="#70d8d0"/><path d="M-4-13q4-1 4 3l-1.500-1m1.500 1l1.500-1" fill="none" stroke="#222" stroke-width="1.200"/></svg>
<svg style="left:61px;top:833.0px" width="6" height="10" viewBox="0 0 6 10"><path d="M0 0l5.500 5L0 10z" fill="#000"/></svg>
<svg style="left:68.0px;top:816.8px" width="44" height="44" viewBox="-22 -22 44 44"><ellipse cx="3" cy="10" rx="15" ry="2.500" fill="#bbb" opacity=".5"/><path d="M-18-5l10-7 26 12-10 8z" fill="#ecd078"/><path d="M-18-5l26 13v4l-26-13z" fill="#c8a040"/><path d="M8 8l10-8v4l-10 8z" fill="#a88020"/><path d="M-14-5l8-5 20 9-8 6z" fill="#f8e8a8" opacity=".7"/></svg>
<svg style="left:113.7px;top:833.0px" width="6" height="10" viewBox="0 0 6 10"><path d="M0 0l5.500 5L0 10z" fill="#000"/></svg>
<svg style="left:122.5px;top:816.0px" width="44" height="44" viewBox="-22 -22 44 44"><ellipse cx="0" cy="13" rx="14" ry="2.500" fill="#bbb" opacity=".6"/><path d="M-14 11q8-3 14-14 6 11 14 14-14 4-28 0z" fill="url(#gGold)"/><path d="M-13-7q5-2 7-6l4-3 4 4 6 1 6 4q-12 5-27 0z" fill="url(#gGold)"/><path d="M-8-9l6-5 3 4z" fill="#c89830"/><path d="M0-4v10l-1.500-2m1.500 2l1.500-2" stroke="#222" stroke-width="1.100" fill="none"/></svg>
<svg style="left:175.0px;top:815.7px" width="44" height="44" viewBox="-22 -22 44 44"><ellipse cx="0" cy="15" rx="12" ry="2.500" fill="#bbb" opacity=".6"/><ellipse cx="0" cy="-9" rx="11.500" ry="7.500" fill="url(#gGold)"/><ellipse cx="-3" cy="-12" rx="5" ry="2.500" fill="#fff4c0" opacity=".8"/><path d="M-11 8q0-7 5-7 3-3 6 0 3-3 6 0 5 0 5 7 0 7-11 7t-11-7z" fill="#e4a850"/><path d="M-6 3q4 4 0 10M0 1v13M6 3q-4 4 0 10" stroke="#b87828" stroke-width="1" fill="none"/><path d="M0-3v6l-1.500-2m1.500 2l1.500-2" stroke="#222" stroke-width="1.100" fill="none"/></svg>
<svg style="left:227.6px;top:816.0px" width="44" height="44" viewBox="-22 -22 44 44"><ellipse cx="0" cy="14" rx="14" ry="2.500" fill="#bbb" opacity=".6"/><g transform="translate(0,7) scale(.95)" opacity=".95"><ellipse cx="-4" cy="3" rx="12" ry="6" fill="#ece0c0" transform="rotate(-12 -4 3)"/><circle cx="10" cy="-1" r="5" fill="#e8dcb8"/><path d="M-10 2q6 4 14 0" stroke="#b8a878" fill="none"/></g><g transform="translate(-1,-9) scale(.9)"><ellipse cx="-4" cy="3" rx="12" ry="7" fill="url(#gGold)" transform="rotate(-18 -4 3)"/><circle cx="10" cy="-4" r="5.500" fill="url(#gGold)"/><circle cx="6.500" cy="-8.500" r="2" fill="#d8a840"/><circle cx="14" cy="-7.500" r="2" fill="#d8a840"/><ellipse cx="-12" cy="3" rx="4" ry="3" fill="#e8c060"/><ellipse cx="4" cy="9" rx="4" ry="2.500" fill="#c89830"/><ellipse cx="-4" cy="2" rx="5" ry="3.500" fill="#f4dc90" transform="rotate(-18 -4 2)"/></g><path d="M0-2v9l-1.500-2m1.500 2l1.500-2m-1.500-7l-1.500 2m1.500-2l1.500 2" stroke="#222" stroke-width="1.100" fill="none"/></svg>
<svg style="left:17.6px;top:863.0px" width="44" height="44" viewBox="-22 -22 44 44"><text x="-12" y="13" font-family="Liberation Serif,serif" font-style="italic" font-size="38" fill="#f6f6f6" stroke="#c4c4c4" stroke-width="1.200">S</text></svg>
<svg style="left:69.8px;top:861.0px" width="44" height="44" viewBox="-22 -22 44 44"><g fill="none" stroke="#c6c6c6" stroke-width="2.400"><ellipse cx="0" cy="0" rx="16" ry="13"/><rect x="-9" y="-9" width="18" height="18" rx="3" transform="rotate(45)"/><rect x="-8" y="-8" width="16" height="16" rx="2"/><path d="M-16 0h32M0-13v26"/></g><g fill="none" stroke="#f4f4f4" stroke-width=".9"><ellipse cx="0" cy="0" rx="16" ry="13"/><rect x="-9" y="-9" width="18" height="18" rx="3" transform="rotate(45)"/><rect x="-8" y="-8" width="16" height="16" rx="2"/><path d="M-16 0h32M0-13v26"/></g></svg>
<svg style="left:121.0px;top:861.3px" width="44" height="44" viewBox="-22 -22 44 44"><ellipse cx="2" cy="15" rx="13" ry="2.500" fill="#aaa" opacity=".6"/><path d="M-13 4l16-4 10 8-15 6z" fill="#4858a0"/><path d="M-13 4l11 10v3l-11-9z" fill="#283468"/><path d="M-2 14l15-6v3l-15 6z" fill="#1c2850"/><text x="-5" y="11" font-family="Liberation Sans,sans-serif" font-weight="bold" font-size="11" fill="#f0d820" transform="skewX(-20)">b</text><path d="M-9-14l4-2 3 4 8-1 2 4-9 3z" fill="#f4d820" stroke="#b89808" stroke-width=".6"/><path d="M-9-14l4 7 9 3" fill="none" stroke="#c8a010" stroke-width=".8"/><circle cx="2" cy="-8" r="1.300" fill="#a03010"/></svg>
<svg style="left:166.3px;top:879.0px" width="6" height="10" viewBox="0 0 6 10"><path d="M0 0l5.500 5L0 10z" fill="#000"/></svg>
<svg style="left:173.5px;top:862.0px" width="44" height="44" viewBox="-22 -22 44 44"><ellipse cx="2" cy="15" rx="12" ry="2.500" fill="#aaa" opacity=".6"/><path d="M-12 8l12-5 12 5-12 6z" fill="#f8e020"/><path d="M-12 8l12 6v3l-12-6z" fill="#c8a000"/><path d="M0 14l12-6v3l-12 6z" fill="#a88000"/><ellipse cx="0" cy="8.500" rx="3.500" ry="2" fill="#702010"/><path d="M-11-11l11-5 11 5-11 6z" fill="#f8e020"/><path d="M-11-11l11 6 11-6-11 9z" fill="#e8b010"/><ellipse cx="0" cy="-11.500" rx="4" ry="2" fill="#f03010"/><path d="M0-2v8l-1.500-2m1.500 2l1.500-2" stroke="#222" stroke-width="1.200" fill="none"/></svg>
<svg style="left:218px;top:879.0px" width="6" height="10" viewBox="0 0 6 10"><path d="M0 0l5.500 5L0 10z" fill="#000"/></svg>
<svg style="left:226.5px;top:861.3px" width="44" height="44" viewBox="-22 -22 44 44"><path d="M-18 14l3-28h30l3 28z" fill="url(#gLavL)"/><path d="M-18 14h36v3h-36z" fill="#7878e0"/><path d="M-2-8q2-6 4 0v22h-4z" fill="#eeeeff"/><path d="M2-2h16v16h-16z" fill="#c8c8e8" opacity=".7"/><path d="M-14 0q-1-16 13-16 11 0 12 11h3.500l-5.500 7-5.500-7h3.500q-1-7-8-7-9 0-8.500 12z" fill="#f0e030" stroke="#a89808" stroke-width=".7"/></svg>
<svg style="left:17.0px;top:906.0px" width="44" height="44" viewBox="-22 -22 44 44"><ellipse cx="2" cy="12" rx="16" ry="3" fill="#999" opacity=".6"/><path d="M0.0 -18.0L5.6 -7.7L17.1 -5.6L9.0 2.9L10.6 14.6L0.0 9.5L-10.6 14.6L-9.0 2.9L-17.1 -5.6L-5.6 -7.7z" fill="url(#gLav)" stroke="#6868c0" stroke-width="1" stroke-linejoin="round"/><path d="M0-2l-10 15 10-6 10 6z" fill="#5858b8" opacity=".55"/><circle cx="0" cy="-3" r="5.500" fill="#d0d0ff"/></svg>
<svg style="left:69.0px;top:906.0px" width="44" height="44" viewBox="-22 -22 44 44"><ellipse cx="2" cy="13" rx="17" ry="3" fill="#999" opacity=".5"/><path d="M-18-4v-4h8q0-9 9-9t9 9h8v4" fill="none" stroke="#111" stroke-width="1.500"/><path d="M-16 6l22 10 4-3-22-10z" fill="#c8c8f8" stroke="#8888c8" stroke-width=".6"/><path d="M-12-1q2-7 9-5l18 8q4 4 0 10l-6 2-21-9z" fill="url(#gLavL)"/><ellipse cx="13" cy="8" rx="3.500" ry="5.500" fill="#a8a8e8" transform="rotate(-20 13 8)"/><path d="M-6 8q2-10 8-11M-9 5l16-8" stroke="#e83040" stroke-width="1.500" fill="none"/></svg>
<svg style="left:120.6px;top:908.0px" width="44" height="44" viewBox="-22 -22 44 44"><ellipse cx="4" cy="10" rx="13" ry="2.500" fill="#aaa" opacity=".5"/><path d="M-16-4q6-8 16-7 13 2 16 16l-6 4q-2-10-12-12-6-1-10 2z" fill="#d8584c"/><path d="M-16-4q6-8 16-7 13 2 16 16l-3 2q-3-13-15-15-8 0-12 5z" fill="#f08878" opacity=".6"/><path d="M-16-4l4 3q4-3 10-2l-2 3q-5 0-8 2z" fill="#f0e0b0"/><path d="M2 6q4 2 6 7l2-4q-2-5-6-6z" fill="#f0e0b0"/></svg>
<svg style="left:166.3px;top:925.0px" width="6" height="10" viewBox="0 0 6 10"><path d="M0 0l5.500 5L0 10z" fill="#000"/></svg>
<svg style="left:173.0px;top:907.0px" width="44" height="44" viewBox="-22 -22 44 44"><path d="M14 10l3-3v6l-3 3z" fill="#aaa" opacity=".6"/><defs><linearGradient id="gRel" x1="0" y1="0" x2="1" y2="1"><stop offset="0" stop-color="#5868a0"/><stop offset=".5" stop-color="#a0b0d0"/><stop offset="1" stop-color="#5c6c98"/></linearGradient></defs><rect x="-15.500" y="-15.500" width="31" height="31" fill="url(#gRel)"/><path d="M-4-12q8-2 9 6l3 3q3 5-2 9-8 5-16 0-3-5 2-9 0-6 4-9z" fill="#c8d4ec" opacity=".75"/><path d="M-6-3q4-6 8 0M-9 6q8 5 16 0M-3 2h6M-6 9q6 3 12 0" stroke="#eef4ff" stroke-width="1" fill="none"/><path d="M-15.500-15.500h31v31" fill="none" stroke="#7888b0" stroke-width="1"/></svg>
<svg style="left:226.5px;top:906.5px" width="44" height="44" viewBox="-22 -22 44 44"><ellipse cx="0" cy="12" rx="16" ry="2.500" fill="#aaa" opacity=".5"/><path d="M-18 6l18-8 18 8-18 9z" fill="#c0c0f0"/><path d="M-18 6l18 9v2l-18-9z M0 15l18-9v2l-18 9z" fill="#9090d0"/><path d="M-12 4l3-14 14-5 8 8-1 12-14 4z" fill="#f4e850" stroke="#c8b820" stroke-width=".8" stroke-dasharray="2 1"/></svg>
<svg style="left:13.5px;top:950.0px" width="44" height="44" viewBox="-22 -22 44 44"><path d="M-13-3q3-8 8-7 4-3 8 0 6 0 9 8v8h-25z" fill="#d81820"/><path d="M-8-8q4-3 8 0" stroke="#f06060" fill="none"/></svg>
<svg style="left:69.5px;top:948.0px" width="44" height="44" viewBox="-22 -22 44 44"><path d="M-17-13h34l-4 24h-26z" fill="#d8d8d8" stroke="#a0a0a0" stroke-width="1.400"/><path d="M-15-7h30M-14 0h28M-8-13l2 24M0-13v24M8-13l-2 24" stroke="#f4f4f4" stroke-width="1.600"/><path d="M-7-8h14v8h-14z" fill="#a8a8a8"/></svg>
<svg style="left:124.6px;top:948.0px" width="44" height="44" viewBox="-22 -22 44 44"><path d="M-17 10q0-24 17-25 17 1 17 25z" fill="url(#gLav)"/><path d="M-2-15l6-2 4 4z" fill="#b0b0f0"/></svg>
<svg style="left:172.0px;top:949.0px" width="44" height="44" viewBox="-22 -22 44 44"><path d="M-16 8q0-22 16-22t16 22z" fill="#58a8e8"/><g fill="none" stroke="#1858b0" stroke-width=".9"><path d="M-16 8q0-22 16-22t16 22"/><path d="M-10 8q0-22 10-22t10 22M-4 8q0-22 4-22t4 22M-14-4h28M-11-9h22M-16 2h32"/></g></svg>
<svg style="left:221.0px;top:949.0px" width="44" height="44" viewBox="-22 -22 44 44"><path d="M-14 6q0-18 14-18t14 18z" fill="#f0d820"/><path d="M-3-14l3 6 5-6 0 8 6-2-4 8h-10z" fill="#4878d0"/></svg>
</div>
<div class="a" style="left:316px;top:98px;width:19px;height:781px;background:#cdcdcd"></div>
<svg style="left:316px;top:72px" width="19" height="20" viewBox="0 0 19 20"><path d="M3 14l6.500-6.500L16 14" fill="none" stroke="#5a5a5a" stroke-width="2.600"/></svg>
<svg style="left:316px;top:984px" width="19" height="20" viewBox="0 0 19 20"><path d="M3 6l6.500 6.500L16 6" fill="none" stroke="#5a5a5a" stroke-width="2.600"/></svg>
<div class="a" style="left:337.2px;top:54px;width:1.8px;height:1000px;background:#b4b4b4"></div>
<div class="a" style="left:339px;top:54px;width:2.2px;height:1000px;background:#fafafa"></div>
<svg style="left:0;top:1021px" width="337" height="33"><defs><filter id="nz" x="0" y="0" width="100%" height="100%"><feTurbulence type="fractalNoise" baseFrequency="0.22 0.14" numOctaves="2" seed="7"/><feColorMatrix type="matrix" values="0 0 0 0 1  0 0 0 0 1  0 0 0 0 1  2.2 0 0 0 -0.85"/></filter></defs><rect width="337" height="33" fill="#d6d6d6"/><rect width="337" height="33" filter="url(#nz)" opacity=".6"/></svg>
<div class="a" style="left:77px;top:1021px;width:260px;height:1.2px;background:#a8a8a8"></div>
<div class="a" style="left:0px;top:1021px;width:77.5px;height:32px;background:#f0f0f0;border-radius:0 0 8px 0;border-right:1px solid #c4c4c4;border-bottom:1px solid #b8b8b8"></div>
<div class="a" style="left:78.5px;top:1022px;width:82px;height:30.5px;background:#f0f0f0;border:1px solid #bdbdbd;border-top:0;border-radius:0 0 7px 7px"></div>
<div class="t " style="left:10px;top:1028.17px;font-size:14.8px;color:#111;letter-spacing:-.12px">Assistant</div>
<div class="t " style="left:88px;top:1028.87px;font-size:14.8px;color:#111;letter-spacing:.18px">Toolpaths</div>
<div class="a" style="left:345px;top:54px;width:1228px;height:1px;background:#a8a8a8"></div>
<div class="a" style="left:345px;top:54px;width:1px;height:1000px;background:#dcdcdc"></div>
<div class="t" style="left:355.5px;top:61.5px;font-size:19px;font-weight:bold;color:#0a0a0a;-webkit-text-stroke:.5px #0a0a0a;transform:scaleX(.86);transform-origin:0 0;letter-spacing:-.5px">3D</div>
<svg width="0" height="0" style="left:0;top:0"><defs><radialGradient id="gLens" cx=".4" cy=".35" r=".7"><stop offset="0" stop-color="#f0fcff"/><stop offset="1" stop-color="#a8e0f0"/></radialGradient></defs></svg>
<svg style="left:379.7px;top:57.6px" width="28" height="28" viewBox="-14 -14 28 28"><ellipse cx="8.500" cy="8" rx="3.200" ry="2.200" fill="#e89840" transform="rotate(40 8.500 8)"/><circle cx="0" cy="0" r="8" fill="url(#gLens)" stroke="#6888b8" stroke-width="1.300"/><path d="M-5 0h10M0-5v10" stroke="#3c5c94" stroke-width="1.800"/></svg>
<svg style="left:408.3px;top:57.6px" width="28" height="28" viewBox="-14 -14 28 28"><ellipse cx="8.500" cy="8" rx="3.200" ry="2.200" fill="#e89840" transform="rotate(40 8.500 8)"/><circle cx="0" cy="0" r="8" fill="url(#gLens)" stroke="#6888b8" stroke-width="1.300"/><path d="M-5 0h10" stroke="#3c5c94" stroke-width="1.800"/></svg>
<svg style="left:437.0px;top:57.6px" width="28" height="28" viewBox="-14 -14 28 28"><ellipse cx="8.500" cy="8" rx="3.200" ry="2.200" fill="#e89840" transform="rotate(40 8.500 8)"/><circle cx="0" cy="0" r="8" fill="url(#gLens)" stroke="#6888b8" stroke-width="1.300"/><path d="M-3-3q6-2 6 3 0 5-6 4" fill="none" stroke="#98a028" stroke-width="2"/><path d="M-5.500-5.500l4.500.5-2.500 4z" fill="#98a028"/></svg>
<div class="a" style="left:471px;top:62.5px;width:1.3px;height:22.5px;background:#a4a4a4"></div>
<svg style="left:476.0px;top:57.6px" width="28" height="28" viewBox="-14 -14 28 28"><ellipse cx="8.500" cy="8" rx="3.200" ry="2.200" fill="#e89840" transform="rotate(40 8.500 8)"/><circle cx="0" cy="0" r="8" fill="url(#gLens)" stroke="#6888b8" stroke-width="1.300"/><text x="-5.800" y="2.800" font-family="Liberation Sans,sans-serif" font-size="8" font-weight="bold" fill="#5878a8">1:1</text></svg>
<svg style="left:504.6px;top:57.6px" width="28" height="28" viewBox="-14 -14 28 28"><ellipse cx="8.500" cy="8" rx="3.200" ry="2.200" fill="#e89840" transform="rotate(40 8.500 8)"/><circle cx="0" cy="0" r="8" fill="url(#gLens)" stroke="#6888b8" stroke-width="1.300"/><rect x="-4.500" y="-3.500" width="9" height="7" fill="none" stroke="#3c5c94" stroke-width="1.600"/></svg>
<svg style="left:533.8px;top:58.5px" width="28" height="28" viewBox="-14 -14 28 28"><circle cx="-1" cy="-1" r="8.500" fill="#9c9c9c"/><path d="M3 5l6 5" stroke="#9c9c9c" stroke-width="4.500" stroke-linecap="round"/><rect x="5" y="6" width="6" height="5" fill="#a8a8a8"/></svg>
<div class="a" style="left:567.2px;top:62.5px;width:1.3px;height:22.5px;background:#a4a4a4"></div>
<div class="a" style="left:573.5px;top:60px;width:28px;height:27px;background:#f9f9f9;border:1px solid;border-color:#8a8a8a #fff #fff #8a8a8a"></div>
<div class="a" style="left:602px;top:60px;width:28px;height:27px;background:#f9f9f9;border:1px solid;border-color:#8a8a8a #fff #fff #8a8a8a"></div>
<svg style="left:576.0px;top:60.4px" width="28" height="28" viewBox="-14 -14 28 28"><g stroke="#555" stroke-width="1"><path d="M-6-9h7M-6-6.500h3M-6-4h3M-6 4h3M-6 6.500h7M-6 9h7M-6-1.500h2M-6 1.500h2"/><path d="M1.500-9.500v19" stroke="#888"/></g><path d="M-4 0l5.500-5.500v3h6.500v5h-6.500v3z" fill="#555" stroke="#111" stroke-width="1.300"/></svg>
<svg style="left:604.0px;top:60.4px" width="28" height="28" viewBox="-14 -14 28 28"><g transform="scale(-1,1)"><g stroke="#555" stroke-width="1"><path d="M-6-9h7M-6-6.500h3M-6-4h3M-6 4h3M-6 6.500h7M-6 9h7M-6-1.500h2M-6 1.500h2"/><path d="M1.500-9.500v19" stroke="#888"/></g></g><path d="M4 0l-5.500-5.500v3h-6.500v5h6.500v3z" fill="#555" stroke="#111" stroke-width="1.300"/></svg>
<svg style="left:631.0px;top:59.0px" width="28" height="28" viewBox="-14 -14 28 28"><path d="M-10.500 0l9-6.500v13z" fill="#6870c0"/><path d="M-1.500-4h4v8h-4z" fill="#8890d0"/><circle cx="4" cy="-1" r="5.200" fill="#b8cce8" stroke="#8898c0" stroke-width="1.200"/><path d="M7 3.500l3.500 3.500" stroke="#d8a878" stroke-width="2.600"/></svg>
<div class="a" style="left:663.5px;top:62.5px;width:1.3px;height:22.5px;background:#a4a4a4"></div>
<div class="a" style="left:680px;top:73.5px;width:92px;height:2px;background:#8a8a8a;border-radius:1px"></div>
<svg style="left:771px;top:62px" width="16" height="27" viewBox="0 0 16 27"><path d="M1 1h12.500v19.500l-5 5.500h-7.500z" fill="#ececec"/><path d="M13.500 1v19.500l-5 5.500" fill="none" stroke="#6c6c6c" stroke-width="1.400"/><path d="M1 26v-25h12.500" fill="none" stroke="#fff" stroke-width="1"/></svg>
<svg style="left:0;top:0" width="1920" height="1080" viewBox="0 0 1920 1080"><rect x="347" y="118" width="1204" height="858" fill="#f0f0f0"/><path d="M347 94H1551M347 118H1551" stroke="#a2a2a2" stroke-width="1.200" fill="none"/><path d="M346.900 93.500V997M371.700 93.500V976" stroke="#a2a2a2" stroke-width="1.200" fill="none"/><path d="M375.2 110V118M439.7 110V118M504.1 110V118M568.5 110V118M632.9 110V118M697.3 110V118M761.7 110V118M826.1 110V118M890.5 110V118M954.9 110V118M1019.3 110V118M1083.8 110V118M1148.2 110V118M1212.6 110V118M1277.0 110V118M1341.4 110V118M1405.8 110V118M1470.2 110V118M1534.6 110V118" stroke="#111" stroke-width="1.300"/><path d="M407.4 112.500V118M471.9 112.500V118M536.3 112.500V118M600.7 112.500V118M665.1 112.500V118M729.5 112.500V118M793.9 112.500V118M858.3 112.500V118M922.7 112.500V118M987.1 112.500V118M1051.5 112.500V118M1116.0 112.500V118M1180.4 112.500V118M1244.8 112.500V118M1309.2 112.500V118M1373.6 112.500V118M1438.0 112.500V118M1502.4 112.500V118" stroke="#111" stroke-width="1.100"/><path d="M381.7 115V118M388.1 115V118M394.6 115V118M401.0 115V118M413.9 115V118M420.3 115V118M426.8 115V118M433.2 115V118M446.1 115V118M452.5 115V118M459.0 115V118M465.4 115V118M478.3 115V118M484.7 115V118M491.2 115V118M497.6 115V118M510.5 115V118M516.9 115V118M523.4 115V118M529.8 115V118M542.7 115V118M549.1 115V118M555.6 115V118M562.0 115V118M574.9 115V118M581.4 115V118M587.8 115V118M594.2 115V118M607.1 115V118M613.6 115V118M620.0 115V118M626.4 115V118M639.3 115V118M645.8 115V118M652.2 115V118M658.6 115V118M671.5 115V118M678.0 115V118M684.4 115V118M690.8 115V118M703.7 115V118M710.2 115V118M716.6 115V118M723.1 115V118M735.9 115V118M742.4 115V118M748.8 115V118M755.3 115V118M768.1 115V118M774.6 115V118M781.0 115V118M787.5 115V118M800.3 115V118M806.8 115V118M813.2 115V118M819.7 115V118M832.6 115V118M839.0 115V118M845.4 115V118M851.9 115V118M864.8 115V118M871.2 115V118M877.6 115V118M884.1 115V118M897.0 115V118M903.4 115V118M909.8 115V118M916.3 115V118M929.2 115V118M935.6 115V118M942.0 115V118M948.5 115V118M961.4 115V118M967.8 115V118M974.3 115V118M980.7 115V118M993.6 115V118M1000.0 115V118M1006.5 115V118M1012.9 115V118M1025.8 115V118M1032.2 115V118M1038.7 115V118M1045.1 115V118M1058.0 115V118M1064.4 115V118M1070.9 115V118M1077.3 115V118M1090.2 115V118M1096.6 115V118M1103.1 115V118M1109.5 115V118M1122.4 115V118M1128.8 115V118M1135.3 115V118M1141.7 115V118M1154.6 115V118M1161.0 115V118M1167.5 115V118M1173.9 115V118M1186.8 115V118M1193.2 115V118M1199.7 115V118M1206.1 115V118M1219.0 115V118M1225.5 115V118M1231.9 115V118M1238.3 115V118M1251.2 115V118M1257.7 115V118M1264.1 115V118M1270.5 115V118M1283.4 115V118M1289.9 115V118M1296.3 115V118M1302.7 115V118M1315.6 115V118M1322.1 115V118M1328.5 115V118M1334.9 115V118M1347.8 115V118M1354.3 115V118M1360.7 115V118M1367.2 115V118M1380.0 115V118M1386.5 115V118M1392.9 115V118M1399.4 115V118M1412.2 115V118M1418.7 115V118M1425.1 115V118M1431.6 115V118M1444.4 115V118M1450.9 115V118M1457.3 115V118M1463.8 115V118M1476.7 115V118M1483.1 115V118M1489.5 115V118M1496.0 115V118M1508.9 115V118M1515.3 115V118M1521.7 115V118M1528.2 115V118M1541.1 115V118M1547.5 115V118" stroke="#222" stroke-width="1"/><path d="M364 939.3H371.500M364 874.9H371.500M364 810.5H371.500M364 746.2H371.500M364 681.8H371.500M364 617.4H371.500M364 553.0H371.500M364 488.6H371.500M364 424.3H371.500M364 359.9H371.500M364 295.5H371.500M364 231.1H371.500M364 166.7H371.500" stroke="#111" stroke-width="1.300"/><path d="M366.500 971.5H371.500M366.500 907.1H371.500M366.500 842.7H371.500M366.500 778.3H371.500M366.500 714.0H371.500M366.500 649.6H371.500M366.500 585.2H371.500M366.500 520.8H371.500M366.500 456.4H371.500M366.500 392.1H371.500M366.500 327.7H371.500M366.500 263.3H371.500M366.500 198.9H371.500M366.500 134.5H371.500" stroke="#111" stroke-width="1.100"/><path d="M368.800 965.1H371.500M368.800 958.6H371.500M368.800 952.2H371.500M368.800 945.7H371.500M368.800 932.9H371.500M368.800 926.4H371.500M368.800 920.0H371.500M368.800 913.5H371.500M368.800 900.7H371.500M368.800 894.2H371.500M368.800 887.8H371.500M368.800 881.4H371.500M368.800 868.5H371.500M368.800 862.0H371.500M368.800 855.6H371.500M368.800 849.2H371.500M368.800 836.3H371.500M368.800 829.9H371.500M368.800 823.4H371.500M368.800 817.0H371.500M368.800 804.1H371.500M368.800 797.7H371.500M368.800 791.2H371.500M368.800 784.8H371.500M368.800 771.9H371.500M368.800 765.5H371.500M368.800 759.0H371.500M368.800 752.6H371.500M368.800 739.7H371.500M368.800 733.3H371.500M368.800 726.8H371.500M368.800 720.4H371.500M368.800 707.5H371.500M368.800 701.1H371.500M368.800 694.7H371.500M368.800 688.2H371.500M368.800 675.3H371.500M368.800 668.9H371.500M368.800 662.5H371.500M368.800 656.0H371.500M368.800 643.2H371.500M368.800 636.7H371.500M368.800 630.3H371.500M368.800 623.8H371.500M368.800 611.0H371.500M368.800 604.5H371.500M368.800 598.1H371.500M368.800 591.6H371.500M368.800 578.8H371.500M368.800 572.3H371.500M368.800 565.9H371.500M368.800 559.5H371.500M368.800 546.6H371.500M368.800 540.1H371.500M368.800 533.7H371.500M368.800 527.3H371.500M368.800 514.4H371.500M368.800 508.0H371.500M368.800 501.5H371.500M368.800 495.1H371.500M368.800 482.2H371.500M368.800 475.8H371.500M368.800 469.3H371.500M368.800 462.9H371.500M368.800 450.0H371.500M368.800 443.6H371.500M368.800 437.1H371.500M368.800 430.7H371.500M368.800 417.8H371.500M368.800 411.4H371.500M368.800 404.9H371.500M368.800 398.5H371.500M368.800 385.6H371.500M368.800 379.2H371.500M368.800 372.8H371.500M368.800 366.3H371.500M368.800 353.4H371.500M368.800 347.0H371.500M368.800 340.6H371.500M368.800 334.1H371.500M368.800 321.3H371.500M368.800 314.8H371.500M368.800 308.4H371.500M368.800 301.9H371.500M368.800 289.1H371.500M368.800 282.6H371.500M368.800 276.2H371.500M368.800 269.7H371.500M368.800 256.9H371.500M368.800 250.4H371.500M368.800 244.0H371.500M368.800 237.6H371.500M368.800 224.7H371.500M368.800 218.2H371.500M368.800 211.8H371.500M368.800 205.4H371.500M368.800 192.5H371.500M368.800 186.1H371.500M368.800 179.6H371.500M368.800 173.2H371.500M368.800 160.3H371.500M368.800 153.9H371.500M368.800 147.4H371.500M368.800 141.0H371.500M368.800 128.1H371.500M368.800 121.7H371.500" stroke="#222" stroke-width="1"/><g font-family="Liberation Sans,sans-serif" font-size="13.200" fill="#111" letter-spacing=".25"><text x="438.9" y="107.200" text-anchor="middle">-1000</text><text x="503.3" y="107.200" text-anchor="middle">-800</text><text x="567.7" y="107.200" text-anchor="middle">-600</text><text x="632.1" y="107.200" text-anchor="middle">-400</text><text x="696.5" y="107.200" text-anchor="middle">-200</text><text x="760.9" y="107.200" text-anchor="middle">0</text><text x="825.3" y="107.200" text-anchor="middle">200</text><text x="889.7" y="107.200" text-anchor="middle">400</text><text x="954.1" y="107.200" text-anchor="middle">600</text><text x="1018.5" y="107.200" text-anchor="middle">800</text><text x="1083.0" y="107.200" text-anchor="middle">1000</text><text x="1147.4" y="107.200" text-anchor="middle">1200</text><text x="1211.8" y="107.200" text-anchor="middle">1400</text><text x="1276.2" y="107.200" text-anchor="middle">1600</text><text x="1340.6" y="107.200" text-anchor="middle">1800</text><text x="1405.0" y="107.200" text-anchor="middle">2000</text><text x="1469.4" y="107.200" text-anchor="middle">2200</text><text transform="translate(361.200 939.6) rotate(-90)" text-anchor="middle">0</text><text transform="translate(361.200 875.2) rotate(-90)" text-anchor="middle">200</text><text transform="translate(361.200 810.8) rotate(-90)" text-anchor="middle">400</text><text transform="translate(361.200 746.5) rotate(-90)" text-anchor="middle">600</text><text transform="translate(361.200 682.1) rotate(-90)" text-anchor="middle">800</text><text transform="translate(361.200 617.7) rotate(-90)" text-anchor="middle">1000</text><text transform="translate(361.200 553.3) rotate(-90)" text-anchor="middle">1200</text><text transform="translate(361.200 488.9) rotate(-90)" text-anchor="middle">1400</text><text transform="translate(361.200 424.6) rotate(-90)" text-anchor="middle">1600</text><text transform="translate(361.200 360.2) rotate(-90)" text-anchor="middle">1800</text><text transform="translate(361.200 295.8) rotate(-90)" text-anchor="middle">2000</text><text transform="translate(361.200 231.4) rotate(-90)" text-anchor="middle">2200</text><text transform="translate(361.200 167.0) rotate(-90)" text-anchor="middle">2400</text></g><text x="1497" y="107.200" font-family="Liberation Sans,sans-serif" font-size="10.800" fill="#111" letter-spacing=".1">millimetres</text><path d="M1300.700 96V118" stroke="#111" stroke-width="1.300"/><path d="M349 242.200H371" stroke="#111" stroke-width="1.200"/><path d="M352 105.500h15M357.500 99v13M361.500 99v13" stroke="#c4c4c4" stroke-width="1" stroke-dasharray="2 1.500" fill="none"/></svg>
<svg style="left:0;top:0" width="1920" height="1080" viewBox="0 0 1920 1080"><defs><linearGradient id="tg"><stop offset="0" stop-color="#000"/><stop offset=".05" stop-color="#0a0a0a"/><stop offset=".15" stop-color="#2e2e2e"/><stop offset=".33" stop-color="#585858"/><stop offset=".5" stop-color="#828282"/><stop offset=".64" stop-color="#a0a0a0"/><stop offset=".77" stop-color="#b8b8b8"/><stop offset=".89" stop-color="#d0d0d0"/><stop offset="1" stop-color="#eaeaea"/></linearGradient><linearGradient id="t1" gradientUnits="userSpaceOnUse" x1="29.3" y1="0.0" x2="29.3" y2="34.6" href="#tg"/><linearGradient id="t2" gradientUnits="userSpaceOnUse" x1="49.3" y1="38.7" x2="29.3" y2="34.6" href="#tg"/><linearGradient id="t3" gradientUnits="userSpaceOnUse" x1="35.1" y1="57.5" x2="29.3" y2="34.6" href="#tg"/><linearGradient id="t4" gradientUnits="userSpaceOnUse" x1="0.0" y1="34.6" x2="29.3" y2="34.6" href="#tg"/><linearGradient id="t5" gradientUnits="userSpaceOnUse" x1="76.0" y1="0.0" x2="76.0" y2="17.8" href="#tg"/><linearGradient id="t6" gradientUnits="userSpaceOnUse" x1="95.1" y1="10.2" x2="76.0" y2="17.8" href="#tg"/><linearGradient id="t7" gradientUnits="userSpaceOnUse" x1="76.0" y1="54.8" x2="76.0" y2="17.8" href="#tg"/><linearGradient id="t8" gradientUnits="userSpaceOnUse" x1="54.4" y1="13.4" x2="76.0" y2="17.8" href="#tg"/><linearGradient id="t9" gradientUnits="userSpaceOnUse" x1="132.9" y1="0.0" x2="132.9" y2="32.3" href="#tg"/><linearGradient id="t10" gradientUnits="userSpaceOnUse" x1="155.0" y1="34.9" x2="132.9" y2="32.3" href="#tg"/><linearGradient id="t11" gradientUnits="userSpaceOnUse" x1="136.4" y1="50.3" x2="132.9" y2="32.3" href="#tg"/><linearGradient id="t12" gradientUnits="userSpaceOnUse" x1="107.9" y1="42.3" x2="132.9" y2="32.3" href="#tg"/><linearGradient id="t13" gradientUnits="userSpaceOnUse" x1="180.8" y1="0.0" x2="180.8" y2="16.8" href="#tg"/><linearGradient id="t14" gradientUnits="userSpaceOnUse" x1="196.9" y1="16.8" x2="180.8" y2="16.8" href="#tg"/><linearGradient id="t15" gradientUnits="userSpaceOnUse" x1="187.3" y1="34.8" x2="180.8" y2="16.8" href="#tg"/><linearGradient id="t16" gradientUnits="userSpaceOnUse" x1="157.4" y1="14.0" x2="180.8" y2="16.8" href="#tg"/><linearGradient id="t17" gradientUnits="userSpaceOnUse" x1="11.4" y1="63.4" x2="18.3" y2="90.7" href="#tg"/><linearGradient id="t18" gradientUnits="userSpaceOnUse" x1="37.2" y1="94.9" x2="18.3" y2="90.7" href="#tg"/><linearGradient id="t19" gradientUnits="userSpaceOnUse" x1="20.0" y1="111.3" x2="18.3" y2="90.7" href="#tg"/><linearGradient id="t20" gradientUnits="userSpaceOnUse" x1="0.0" y1="90.7" x2="18.3" y2="90.7" href="#tg"/><linearGradient id="t21" gradientUnits="userSpaceOnUse" x1="75.2" y1="54.8" x2="75.2" y2="81.3" href="#tg"/><linearGradient id="t22" gradientUnits="userSpaceOnUse" x1="97.5" y1="90.8" x2="75.2" y2="81.3" href="#tg"/><linearGradient id="t23" gradientUnits="userSpaceOnUse" x1="78.9" y1="102.0" x2="75.2" y2="81.3" href="#tg"/><linearGradient id="t24" gradientUnits="userSpaceOnUse" x1="41.8" y1="74.0" x2="75.2" y2="81.3" href="#tg"/><linearGradient id="t25" gradientUnits="userSpaceOnUse" x1="124.8" y1="52.5" x2="128.0" y2="69.2" href="#tg"/><linearGradient id="t26" gradientUnits="userSpaceOnUse" x1="156.6" y1="64.2" x2="128.0" y2="69.2" href="#tg"/><linearGradient id="t27" gradientUnits="userSpaceOnUse" x1="126.7" y1="100.7" x2="128.0" y2="69.2" href="#tg"/><linearGradient id="t28" gradientUnits="userSpaceOnUse" x1="109.9" y1="61.6" x2="128.0" y2="69.2" href="#tg"/><linearGradient id="t29" gradientUnits="userSpaceOnUse" x1="163.2" y1="43.5" x2="175.6" y2="78.0" href="#tg"/><linearGradient id="t30" gradientUnits="userSpaceOnUse" x1="196.9" y1="78.0" x2="175.6" y2="78.0" href="#tg"/><linearGradient id="t31" gradientUnits="userSpaceOnUse" x1="169.7" y1="103.8" x2="175.6" y2="78.0" href="#tg"/><linearGradient id="t32" gradientUnits="userSpaceOnUse" x1="159.5" y1="80.8" x2="175.6" y2="78.0" href="#tg"/><linearGradient id="t33" gradientUnits="userSpaceOnUse" x1="22.2" y1="111.1" x2="23.4" y2="125.7" href="#tg"/><linearGradient id="t34" gradientUnits="userSpaceOnUse" x1="37.8" y1="115.9" x2="23.4" y2="125.7" href="#tg"/><linearGradient id="t35" gradientUnits="userSpaceOnUse" x1="29.6" y1="151.7" x2="23.4" y2="125.7" href="#tg"/><linearGradient id="t36" gradientUnits="userSpaceOnUse" x1="0.0" y1="125.7" x2="23.4" y2="125.7" href="#tg"/><linearGradient id="t37" gradientUnits="userSpaceOnUse" x1="70.4" y1="103.5" x2="74.0" y2="123.8" href="#tg"/><linearGradient id="t38" gradientUnits="userSpaceOnUse" x1="98.0" y1="104.3" x2="74.0" y2="123.8" href="#tg"/><linearGradient id="t39" gradientUnits="userSpaceOnUse" x1="75.2" y1="144.1" x2="74.0" y2="123.8" href="#tg"/><linearGradient id="t40" gradientUnits="userSpaceOnUse" x1="53.0" y1="138.1" x2="74.0" y2="123.8" href="#tg"/><linearGradient id="t41" gradientUnits="userSpaceOnUse" x1="140.8" y1="101.3" x2="139.6" y2="130.6" href="#tg"/><linearGradient id="t42" gradientUnits="userSpaceOnUse" x1="154.0" y1="134.7" x2="139.6" y2="130.6" href="#tg"/><linearGradient id="t43" gradientUnits="userSpaceOnUse" x1="139.6" y1="141.1" x2="139.6" y2="130.6" href="#tg"/><linearGradient id="t44" gradientUnits="userSpaceOnUse" x1="127.5" y1="140.5" x2="139.6" y2="130.6" href="#tg"/><linearGradient id="t45" gradientUnits="userSpaceOnUse" x1="181.5" y1="106.5" x2="177.4" y2="124.1" href="#tg"/><linearGradient id="t46" gradientUnits="userSpaceOnUse" x1="196.9" y1="124.1" x2="177.4" y2="124.1" href="#tg"/><linearGradient id="t47" gradientUnits="userSpaceOnUse" x1="172.2" y1="145.9" x2="177.4" y2="124.1" href="#tg"/><linearGradient id="t48" gradientUnits="userSpaceOnUse" x1="158.5" y1="118.8" x2="177.4" y2="124.1" href="#tg"/><linearGradient id="t49" gradientUnits="userSpaceOnUse" x1="20.5" y1="153.9" x2="25.4" y2="174.8" href="#tg"/><linearGradient id="t50" gradientUnits="userSpaceOnUse" x1="58.5" y1="173.9" x2="25.4" y2="174.8" href="#tg"/><linearGradient id="t51" gradientUnits="userSpaceOnUse" x1="25.4" y1="196.6" x2="25.4" y2="174.8" href="#tg"/><linearGradient id="t52" gradientUnits="userSpaceOnUse" x1="0.0" y1="174.8" x2="25.4" y2="174.8" href="#tg"/><linearGradient id="t53" gradientUnits="userSpaceOnUse" x1="87.9" y1="143.4" x2="89.6" y2="173.4" href="#tg"/><linearGradient id="t54" gradientUnits="userSpaceOnUse" x1="120.2" y1="179.6" x2="89.6" y2="173.4" href="#tg"/><linearGradient id="t55" gradientUnits="userSpaceOnUse" x1="89.6" y1="196.6" x2="89.6" y2="173.4" href="#tg"/><linearGradient id="t56" gradientUnits="userSpaceOnUse" x1="58.5" y1="174.2" x2="89.6" y2="173.4" href="#tg"/><linearGradient id="t57" gradientUnits="userSpaceOnUse" x1="139.2" y1="141.1" x2="139.2" y2="162.6" href="#tg"/><linearGradient id="t58" gradientUnits="userSpaceOnUse" x1="154.8" y1="160.6" x2="139.2" y2="162.6" href="#tg"/><linearGradient id="t59" gradientUnits="userSpaceOnUse" x1="139.2" y1="196.6" x2="139.2" y2="162.6" href="#tg"/><linearGradient id="t60" gradientUnits="userSpaceOnUse" x1="124.2" y1="159.6" x2="139.2" y2="162.6" href="#tg"/><linearGradient id="t61" gradientUnits="userSpaceOnUse" x1="185.0" y1="149.0" x2="178.8" y2="174.8" href="#tg"/><linearGradient id="t62" gradientUnits="userSpaceOnUse" x1="196.9" y1="174.8" x2="178.8" y2="174.8" href="#tg"/><linearGradient id="t63" gradientUnits="userSpaceOnUse" x1="178.8" y1="196.6" x2="178.8" y2="174.8" href="#tg"/><linearGradient id="t64" gradientUnits="userSpaceOnUse" x1="157.0" y1="177.6" x2="178.8" y2="174.8" href="#tg"/><g id="tile" shape-rendering="crispEdges"><rect width="196.90" height="196.60" fill="#000"/><path d="M0.0 0.0L57.1 0.0L29.3 34.6z" fill="url(#t1)"/><path d="M57.1 0.0L46.1 54.8L29.3 34.6z" fill="url(#t2)"/><path d="M46.1 54.8L0.0 66.3L29.3 34.6z" fill="url(#t3)"/><path d="M0.0 66.3L0.0 0.0L29.3 34.6z" fill="url(#t4)"/><path d="M57.1 0.0L91.1 0.0L76.0 17.8z" fill="url(#t5)"/><path d="M91.1 0.0L112.8 54.8L76.0 17.8z" fill="url(#t6)"/><path d="M112.8 54.8L46.1 54.8L76.0 17.8z" fill="url(#t7)"/><path d="M46.1 54.8L57.1 0.0L76.0 17.8z" fill="url(#t8)"/><path d="M91.1 0.0L159.1 0.0L132.9 32.3z" fill="url(#t9)"/><path d="M159.1 0.0L153.6 47.0L132.9 32.3z" fill="url(#t10)"/><path d="M153.6 47.0L112.8 54.8L132.9 32.3z" fill="url(#t11)"/><path d="M112.8 54.8L91.1 0.0L132.9 32.3z" fill="url(#t12)"/><path d="M159.1 0.0L196.9 0.0L180.8 16.8z" fill="url(#t13)"/><path d="M196.9 0.0L196.9 31.3L180.8 16.8z" fill="url(#t14)"/><path d="M196.9 31.3L153.6 47.0L180.8 16.8z" fill="url(#t15)"/><path d="M153.6 47.0L159.1 0.0L180.8 16.8z" fill="url(#t16)"/><path d="M0.0 66.3L46.1 54.8L18.3 90.7z" fill="url(#t17)"/><path d="M46.1 54.8L33.9 110.1L18.3 90.7z" fill="url(#t18)"/><path d="M33.9 110.1L0.0 113.0L18.3 90.7z" fill="url(#t19)"/><path d="M0.0 113.0L0.0 66.3L18.3 90.7z" fill="url(#t20)"/><path d="M46.1 54.8L112.8 54.8L75.2 81.3z" fill="url(#t21)"/><path d="M112.8 54.8L93.9 99.3L75.2 81.3z" fill="url(#t22)"/><path d="M93.9 99.3L33.9 110.1L75.2 81.3z" fill="url(#t23)"/><path d="M33.9 110.1L46.1 54.8L75.2 81.3z" fill="url(#t24)"/><path d="M112.8 54.8L153.6 47.0L128.0 69.2z" fill="url(#t25)"/><path d="M153.6 47.0L163.2 102.3L128.0 69.2z" fill="url(#t26)"/><path d="M163.2 102.3L93.9 99.3L128.0 69.2z" fill="url(#t27)"/><path d="M93.9 99.3L112.8 54.8L128.0 69.2z" fill="url(#t28)"/><path d="M153.6 47.0L196.9 31.3L175.6 78.0z" fill="url(#t29)"/><path d="M196.9 31.3L196.9 110.1L175.6 78.0z" fill="url(#t30)"/><path d="M196.9 110.1L163.2 102.3L175.6 78.0z" fill="url(#t31)"/><path d="M163.2 102.3L153.6 47.0L175.6 78.0z" fill="url(#t32)"/><path d="M0.0 113.0L33.9 110.1L23.4 125.7z" fill="url(#t33)"/><path d="M33.9 110.1L57.7 145.1L23.4 125.7z" fill="url(#t34)"/><path d="M57.7 145.1L0.0 158.7L23.4 125.7z" fill="url(#t35)"/><path d="M0.0 158.7L0.0 113.0L23.4 125.7z" fill="url(#t36)"/><path d="M33.9 110.1L93.9 99.3L74.0 123.8z" fill="url(#t37)"/><path d="M93.9 99.3L128.0 141.1L74.0 123.8z" fill="url(#t38)"/><path d="M128.0 141.1L57.7 145.1L74.0 123.8z" fill="url(#t39)"/><path d="M57.7 145.1L33.9 110.1L74.0 123.8z" fill="url(#t40)"/><path d="M93.9 99.3L163.2 102.3L139.6 130.6z" fill="url(#t41)"/><path d="M163.2 102.3L152.2 141.1L139.6 130.6z" fill="url(#t42)"/><path d="M152.2 141.1L128.0 141.1L139.6 130.6z" fill="url(#t43)"/><path d="M128.0 141.1L93.9 99.3L139.6 130.6z" fill="url(#t44)"/><path d="M163.2 102.3L196.9 110.1L177.4 124.1z" fill="url(#t45)"/><path d="M196.9 110.1L196.9 151.9L177.4 124.1z" fill="url(#t46)"/><path d="M196.9 151.9L152.2 141.1L177.4 124.1z" fill="url(#t47)"/><path d="M152.2 141.1L163.2 102.3L177.4 124.1z" fill="url(#t48)"/><path d="M0.0 158.7L57.7 145.1L25.4 174.8z" fill="url(#t49)"/><path d="M57.7 145.1L59.1 196.6L25.4 174.8z" fill="url(#t50)"/><path d="M59.1 196.6L0.0 196.6L25.4 174.8z" fill="url(#t51)"/><path d="M0.0 196.6L0.0 158.7L25.4 174.8z" fill="url(#t52)"/><path d="M57.7 145.1L128.0 141.1L89.6 173.4z" fill="url(#t53)"/><path d="M128.0 141.1L116.8 196.6L89.6 173.4z" fill="url(#t54)"/><path d="M116.8 196.6L59.1 196.6L89.6 173.4z" fill="url(#t55)"/><path d="M59.1 196.6L57.7 145.1L89.6 173.4z" fill="url(#t56)"/><path d="M128.0 141.1L152.2 141.1L139.2 162.6z" fill="url(#t57)"/><path d="M152.2 141.1L159.5 196.6L139.2 162.6z" fill="url(#t58)"/><path d="M159.5 196.6L116.8 196.6L139.2 162.6z" fill="url(#t59)"/><path d="M116.8 196.6L128.0 141.1L139.2 162.6z" fill="url(#t60)"/><path d="M152.2 141.1L196.9 151.9L178.8 174.8z" fill="url(#t61)"/><path d="M196.9 151.9L196.9 196.6L178.8 174.8z" fill="url(#t62)"/><path d="M196.9 196.6L159.5 196.6L178.8 174.8z" fill="url(#t63)"/><path d="M159.5 196.6L152.2 141.1L178.8 174.8z" fill="url(#t64)"/></g></defs><rect x="761.0" y="152.0" width="394.79999999999995" height="789.0" fill="#000"/><clipPath id="pc"><rect x="762.0" y="152.0" width="393.79999999999995" height="786.4"/></clipPath><filter id="bl" x="-2%" y="-2%" width="104%" height="104%"><feGaussianBlur stdDeviation=".75"/></filter><g clip-path="url(#pc)"><g filter="url(#bl)"><use href="#tile" x="762.00" y="152.00"/><use href="#tile" x="762.00" y="348.60"/><use href="#tile" x="762.00" y="545.20"/><use href="#tile" x="762.00" y="741.80"/><use href="#tile" x="958.90" y="152.00"/><use href="#tile" x="958.90" y="348.60"/><use href="#tile" x="958.90" y="545.20"/><use href="#tile" x="958.90" y="741.80"/></g></g><path d="M763.1 153.0V939.700" stroke="#a8a878" stroke-width="2.200"/><path d="M762.0 348.300H1154.8" stroke="#d0d094" stroke-width="1.500"/><path d="M762.5 938.400H1154.8" stroke="#f6f6c0" stroke-width="2.600"/></svg>
<div class="a" style="left:1550.5px;top:118px;width:1.5px;height:859px;background:#fff"></div>
<div class="a" style="left:372px;top:976px;width:1180px;height:1.5px;background:#fff"></div>
<div class="a" style="left:1572.5px;top:54px;width:1.5px;height:1000px;background:#fff"></div>
<div class="a" style="left:346px;top:997.3px;width:1227px;height:1.5px;background:#fcfcfc"></div>
<div class="a" style="left:1551px;top:93.5px;width:21px;height:24.5px;background:#f0f0f0;border:1px solid;border-color:#fff #6c6c6c #6c6c6c #fff"></div>
<svg style="left:1551px;top:94px" width="21" height="24" viewBox="0 0 21 24"><path d="M5 11h11l-5.500 5.500z" fill="#000"/><path d="M5.500 8.500h3.500m2 0h3.500" stroke="#000" stroke-width="1.500"/></svg>
<div class="a" style="left:1561px;top:140px;width:2px;height:815px;background:#8c8c8c"></div>
<div class="a" style="left:394px;top:986.5px;width:1136px;height:2px;background:#8c8c8c"></div>
<div class="a" style="left:347px;top:976px;width:25px;height:20.5px;background:#f0f0f0;border:1px solid;border-color:#fff #7c7c7c #7c7c7c #fff"></div>
<svg style="left:347px;top:976px" width="25" height="21" viewBox="0 0 25 21"><path d="M11.500 5.500l6 5-6 5z" fill="#000"/><path d="M8 6v3.500m0 2v3.500" stroke="#000" stroke-width="1.500"/></svg>
<div class="a" style="left:1551px;top:1004px;width:1.2px;height:50px;background:#f8f8f8"></div>
<div class="a" style="left:347px;top:1002px;width:1226px;height:1px;background:#c4c4c4"></div>
<div class="a" style="left:347px;top:1003px;width:1226px;height:1.2px;background:#fdfdfd"></div>
<div class="a" style="left:346.5px;top:1002px;width:1.5px;height:52px;background:#c8c8c8"></div>
<div class="a" style="left:372px;top:1023.5px;width:32.5px;height:25.5px;background:#000"></div>
<div class="a" style="left:353.5px;top:1009px;width:32px;height:24.5px;background:#fff;border:1.500px solid #333;box-shadow:1px 1px 0 #aaa"></div>
<svg style="left:387px;top:1008px" width="20" height="14" viewBox="0 0 20 14"><g fill="#f0f0f0" stroke="#111" stroke-width="1.300"><rect x="2.500" y="2" width="9" height="6" rx="3"/><rect x="7" y="5.500" width="9" height="6" rx="3"/></g></svg>
<div class="sw" style="left:417.3px;background:#ffffff"></div>
<div class="sw" style="left:462.3px;background:#000000"></div>
<div class="sw" style="left:507.3px;background:#00ffff"></div>
<div class="sw" style="left:552.3px;background:#3040e0"></div>
<div class="sw" style="left:597.3px;background:#50b850"></div>
<div class="sw" style="left:642.4px;background:#e01020"></div>
<div class="sw" style="left:687.4px;background:#a028e0"></div>
<div class="sw" style="left:732.4px;background:#ffff80"></div>
<div class="sw" style="left:777.4px;background:#b0a030"></div>
<div class="sw" style="left:822.4px;background:#ffd010"></div>
<div class="sw" style="left:867.4px;background:#000000"></div>
<div class="sw" style="left:912.4px;background:#000000"></div>
<div class="sw" style="left:957.4px;background:#000000"></div>
<div class="sw" style="left:1002.4px;background:#000000"></div>
<div class="sw" style="left:1047.4px;background:#000000"></div>
<div class="sw" style="left:1092.5px;background:#000000"></div>
<div class="sw" style="left:1137.5px;background:#000000"></div>
<div class="sw" style="left:1182.5px;background:#010101"></div>
<div class="sw" style="left:1227.5px;background:#030303"></div>
<div class="sw" style="left:1272.5px;background:#040404"></div>
<div class="sw" style="left:1317.5px;background:#060606"></div>
<div class="sw" style="left:1362.5px;background:#070707"></div>
<div class="sw" style="left:1407.5px;background:#090909"></div>
<div class="sw" style="left:1452.5px;background:#0a0a0a"></div>
<div class="sw" style="left:1497.5px;background:#0c0c0c"></div>
<div class="a" style="left:1579px;top:54px;width:2px;height:1000px;background:#b6b6b6"></div>
<div class="rh" style="top:56.4px"><b>Vectors</b><span class="cb" style="left:280.800px;top:.5px"></span></div>
<div class="combo" style="top:77.5px"><span>Default Sheet</span><i></i></div>
<svg style="left:1587.3px;top:110.5px" width="26" height="26" viewBox="-13 -13 26 26"><path d="M3 8l5-4v4z" fill="#b8b8b8"/><path d="M-8-9.500h7l4 4v15h-11z" fill="url(#gDoc)"/><path d="M-1-9.500l4 4h-4z" fill="#f0f4fa"/></svg>
<svg style="left:1632.8px;top:110.5px" width="26" height="26" viewBox="-13 -13 26 26"><path d="M-10-3q0-3 2-3.500l5-2 2 2 5-.5 1.500 5-2 8h-12z" fill="#f0e000"/><path d="M-8 1q4-3 17-2.500 1.500 0 1 2l-2 5.500q-7 .5-14 2z" fill="url(#gYel)" stroke="#c8b000" stroke-width=".5"/></svg>
<svg style="left:1679.5px;top:110.5px" width="26" height="26" viewBox="-13 -13 26 26"><path d="M7 6l4-2v3z" fill="#bbb"/><rect x="-9" y="-8" width="17" height="16" rx="1" fill="url(#gSave)"/><rect x="-6" y="-7" width="11" height="7" fill="#e8ecf2"/><rect x="-5" y="2.500" width="8" height="5.500" fill="#d8dce4"/><rect x="-3.500" y="3.500" width="2.500" height="4" fill="#1848c0"/></svg>
<svg style="left:1724.5px;top:110.5px" width="26" height="26" viewBox="-13 -13 26 26"><path d="M-9-8l3-1 2 1 3-1 2 2 2 0 1 4 3 3-1 3 3 4-3 2-3-1-2 1-3-1-2 1-3-2 0-4-2-3 1-3-1-3z" fill="#c4a274"/><path d="M-7-6l5 0 3 4 2 5 3 5" fill="none" stroke="#a08050" stroke-width=".8"/><path d="M4 8l6-1 1 2-6 1z" fill="#aaa" opacity=".5"/></svg>
<svg style="left:1771.2px;top:110.5px" width="26" height="26" viewBox="-13 -13 26 26"><path d="M-7.500-10h10l5 4v16h-15z" fill="url(#gDoc)"/><g transform="translate(0,1) scale(.95)"><circle cx="0" cy="-2" r="5.200" fill="#ffd040"/><circle cx="-1" cy="-3.500" r="2.600" fill="#fff8c8"/><path d="M-2.500 2.500h5l-.5 3h-4z" fill="#e89020"/><rect x="-2" y="5.500" width="4" height="2.500" fill="#402000"/></g></svg>
<svg style="left:1817.8px;top:110.5px" width="26" height="26" viewBox="-13 -13 26 26"><path d="M-6.500-5h13l-1.500 12q-5 2.500-10 0z" fill="#4890f0"/><path d="M-3-4l-1 11q2 1 3 1z" fill="#88c0ff" opacity=".8"/><ellipse cx="0" cy="-5" rx="6.800" ry="2.600" fill="#a8d0ff" stroke="#2868d0" stroke-width=".8"/><path d="M-2-5.500l2-1 2 1" fill="none" stroke="#fff" stroke-width=".8"/></svg>
<svg style="left:1863.7px;top:110.5px" width="26" height="26" viewBox="-13 -13 26 26"><rect x="-11" y="-11" width="22" height="22" fill="#f4f4f4" stroke="#999" stroke-width=".8"/><path d="M-11 11v-22h22" fill="none" stroke="#777" stroke-width="1"/><g transform="translate(-4,2) scale(1.150)"><circle cx="0" cy="-2" r="5.200" fill="#ffd040"/><circle cx="-1" cy="-3.500" r="2.600" fill="#fff8c8"/><path d="M-2.500 2.500h5l-.5 3h-4z" fill="#e89020"/><rect x="-2" y="5.500" width="4" height="2.500" fill="#402000"/></g><g transform="translate(4,-2) scale(1.150)"><circle cx="0" cy="-2" r="5.200" fill="#ffd040"/><circle cx="-1" cy="-3.500" r="2.600" fill="#fff8c8"/><path d="M-2.500 2.500h5l-.5 3h-4z" fill="#e89020"/><rect x="-2" y="5.500" width="4" height="2.500" fill="#402000"/></g></svg>
<div class="a" style="left:1590px;top:141px;width:303px;height:31.5px;background:#d6d6d6"></div>
<div class="a" style="left:1594.5px;top:146.5px;width:21.5px;height:20.5px;background:#e0e0e0;border:1px solid;border-color:#fff #8a8a8a #8a8a8a #fff"></div>
<div class="a" style="left:1596.5px;top:148.5px;width:17px;height:17px;background:#000;border-radius:50%"></div>
<div class="t " style="left:1622.5px;top:149.80px;font-size:15px;">Default Layer</div>
<div class="a" style="left:1821px;top:145.8px;width:21px;height:21px;background:linear-gradient(135deg,#f4f4f4,#b8b8b8);border:1px solid;border-color:#fff #8a8a8a #8a8a8a #fff"></div>
<svg style="left:1818.5px;top:143.5px" width="26" height="26" viewBox="-13 -13 26 26"><path d="M-3-1v-2.500a3.500 3.500 0 0 1 7 0v1" fill="none" stroke="#f4f4f4" stroke-width="2.200"/><path d="M-3-1v-2.500a3.500 3.500 0 0 1 7 0v1" fill="none" stroke="#999" stroke-width=".7"/><rect x="-5" y="-1" width="9" height="8" fill="#c8c8c8" stroke="#888" stroke-width=".6"/><path d="M-.5 6.500v-3h-2l3-3 3 3h-2v3z" fill="#000"/></svg>
<div class="a" style="left:1843.5px;top:145.8px;width:21.5px;height:21px;background:#dcdcdc;border:1px solid;border-color:#fff #8a8a8a #8a8a8a #fff"></div>
<svg style="left:1841.5px;top:143.5px" width="26" height="26" viewBox="-13 -13 26 26"><path d="M-7.500-10v19M-10 7h18" stroke="#111" stroke-width="1" stroke-dasharray="2.500 1.500"/><path d="M-5 4l1-5.500 1.800 1.500 6-7 2.500 2.500-6.500 6.500 1.700 1.500z" fill="#000"/></svg>
<div class="a" style="left:1866.5px;top:145.8px;width:21px;height:21px;background:#e4e4e4;border:1px solid;border-color:#fff #8a8a8a #8a8a8a #fff"></div>
<svg style="left:1864.0px;top:143.5px" width="26" height="26" viewBox="-13 -13 26 26"><g transform="translate(0,.5) scale(1.250)"><circle cx="0" cy="-2" r="5.200" fill="#ffd040"/><circle cx="-1" cy="-3.500" r="2.600" fill="#fff8c8"/><path d="M-2.500 2.500h5l-.5 3h-4z" fill="#e89020"/><rect x="-2" y="5.500" width="4" height="2.500" fill="#402000"/></g></svg>
<svg style="left:1852px;top:176.5px" width="15" height="15" viewBox="0 0 15 15"><rect x=".5" y=".5" width="14" height="14" rx="2" fill="#1a50c0" stroke="#0a2478"/><path d="M1.500 13.500v-12h12" fill="none" stroke="#5a90f0" stroke-width="1"/><path d="M7.500 12v-8M3.800 7.300l3.700-3.700 3.700 3.700" fill="none" stroke="#fff" stroke-width="1.900"/></svg>
<svg style="left:1874.5px;top:176.5px" width="15" height="15" viewBox="0 0 15 15"><rect x=".5" y=".5" width="14" height="14" rx="2" fill="#1a50c0" stroke="#0a2478"/><path d="M1.500 13.500v-12h12" fill="none" stroke="#5a90f0" stroke-width="1"/><path d="M7.500 3.500v8M3.800 8.200l3.700 3.700 3.700-3.700" fill="none" stroke="#fff" stroke-width="1.900"/></svg>
<div class="rh" style="top:215.6px"><b>Bitmaps</b><span class="cb" style="left:280.800px;top:.5px"></span></div>
<svg style="left:1587.3px;top:237.0px" width="26" height="26" viewBox="-13 -13 26 26"><path d="M3 8l5-4v4z" fill="#b8b8b8"/><path d="M-8-9.500h7l4 4v15h-11z" fill="url(#gDoc)"/><path d="M-1-9.500l4 4h-4z" fill="#f0f4fa"/></svg>
<svg style="left:1627.4px;top:237.0px" width="26" height="26" viewBox="-13 -13 26 26"><path d="M-10-3q0-3 2-3.500l5-2 2 2 5-.5 1.500 5-2 8h-12z" fill="#f0e000"/><path d="M-8 1q4-3 17-2.500 1.500 0 1 2l-2 5.500q-7 .5-14 2z" fill="url(#gYel)" stroke="#c8b000" stroke-width=".5"/></svg>
<svg style="left:1664.8px;top:237.0px" width="26" height="26" viewBox="-13 -13 26 26"><path d="M7 6l4-2v3z" fill="#bbb"/><rect x="-9" y="-8" width="17" height="16" rx="1" fill="url(#gSave)"/><rect x="-6" y="-7" width="11" height="7" fill="#e8ecf2"/><rect x="-5" y="2.500" width="8" height="5.500" fill="#d8dce4"/><rect x="-3.500" y="3.500" width="2.500" height="4" fill="#1848c0"/></svg>
<svg style="left:1705.6px;top:237.0px" width="26" height="26" viewBox="-13 -13 26 26"><path d="M-9-8l3-1 2 1 3-1 2 2 2 0 1 4 3 3-1 3 3 4-3 2-3-1-2 1-3-1-2 1-3-2 0-4-2-3 1-3-1-3z" fill="#c4a274"/><path d="M-7-6l5 0 3 4 2 5 3 5" fill="none" stroke="#a08050" stroke-width=".8"/><path d="M4 8l6-1 1 2-6 1z" fill="#aaa" opacity=".5"/></svg>
<svg style="left:1744.8px;top:237.0px" width="26" height="26" viewBox="-13 -13 26 26"><path d="M7 5l4-2v3l-3 4z" fill="#aaa"/><defs><linearGradient id="gGr" x1="0" y1="0" x2="1" y2="1"><stop offset="0" stop-color="#888"/><stop offset="1" stop-color="#f4f4f4"/></linearGradient></defs><rect x="-9" y="-8.500" width="17" height="17" fill="url(#gGr)"/></svg>
<svg style="left:1784.9px;top:237.0px" width="26" height="26" viewBox="-13 -13 26 26"><path d="M-2 0h11l2 8h-13z" fill="#8088d0"/><g transform="translate(-4,-3) scale(.62)"><rect x="-10" y="-10" width="20" height="20" fill="#5a4820"/><path d="M0-10h10v9h-7z" fill="#a0a060"/><path d="M-10-10h4v7h-4z" fill="#7a7a40"/><path d="M-6 10q0-8 3-9 3-1 5 0 4 1 4 9z" fill="#2a1c10"/><path d="M-6-2q-1.500-8 3.500-8t3.500 8l.5 4h-8z" fill="#1c1208"/><ellipse cx="-2.500" cy="-4" rx="2.600" ry="3.400" fill="#d8a868"/><path d="M-5 5q3-2.500 6 0v2h-6z" fill="#c89858"/><path d="M-3 7h8v3h-8z" fill="#d0b040"/></g></svg>
<svg style="left:1824.0px;top:237.0px" width="26" height="26" viewBox="-13 -13 26 26"><path d="M-6.500-5h13l-1.500 12q-5 2.500-10 0z" fill="#4890f0"/><path d="M-3-4l-1 11q2 1 3 1z" fill="#88c0ff" opacity=".8"/><ellipse cx="0" cy="-5" rx="6.800" ry="2.600" fill="#a8d0ff" stroke="#2868d0" stroke-width=".8"/><path d="M-2-5.500l2-1 2 1" fill="none" stroke="#fff" stroke-width=".8"/></svg>
<svg style="left:1863.7px;top:237.0px" width="26" height="26" viewBox="-13 -13 26 26"><rect x="-11" y="-11" width="22" height="22" fill="#f4f4f4" stroke="#999" stroke-width=".8"/><path d="M-11 11v-22h22" fill="none" stroke="#777" stroke-width="1"/><g transform="translate(-4,2) scale(1.150)"><circle cx="0" cy="-2" r="5.200" fill="#ffd040"/><circle cx="-1" cy="-3.500" r="2.600" fill="#fff8c8"/><path d="M-2.500 2.500h5l-.5 3h-4z" fill="#e89020"/><rect x="-2" y="5.500" width="4" height="2.500" fill="#402000"/></g><g transform="translate(4,-2) scale(1.150)"><circle cx="0" cy="-2" r="5.200" fill="#ffd040"/><circle cx="-1" cy="-3.500" r="2.600" fill="#fff8c8"/><path d="M-2.500 2.500h5l-.5 3h-4z" fill="#e89020"/><rect x="-2" y="5.500" width="4" height="2.500" fill="#402000"/></g></svg>
<div class="a" style="left:1590px;top:266.5px;width:303px;height:29.5px;background:#d6d6d6"></div>
<svg style="left:1591.5px;top:268.7px" width="26" height="26" viewBox="-13 -13 26 26"><rect x="-10" y="-10" width="20" height="20" fill="#5a4820"/><path d="M0-10h10v9h-7z" fill="#a0a060"/><path d="M-10-10h4v7h-4z" fill="#7a7a40"/><path d="M-6 10q0-8 3-9 3-1 5 0 4 1 4 9z" fill="#2a1c10"/><path d="M-6-2q-1.500-8 3.500-8t3.500 8l.5 4h-8z" fill="#1c1208"/><ellipse cx="-2.500" cy="-4" rx="2.600" ry="3.400" fill="#d8a868"/><path d="M-5 5q3-2.500 6 0v2h-6z" fill="#c89858"/><path d="M-3 7h8v3h-8z" fill="#d0b040"/></svg>
<div class="t " style="left:1622.5px;top:274.80px;font-size:15px;">Bitmap Layer 1</div>
<div class="rh" style="top:316.2px"><b>Reliefs</b><span class="cb" style="left:280.800px;top:.5px"></span></div>
<div class="combo" style="top:337.5px"><span>Front Relief</span><i></i></div>
<svg style="left:1587.3px;top:370.3px" width="26" height="26" viewBox="-13 -13 26 26"><path d="M3 8l5-4v4z" fill="#b8b8b8"/><path d="M-8-9.500h7l4 4v15h-11z" fill="url(#gDoc)"/><path d="M-1-9.500l4 4h-4z" fill="#f0f4fa"/></svg>
<svg style="left:1621.5px;top:370.3px" width="26" height="26" viewBox="-13 -13 26 26"><path d="M-10-3q0-3 2-3.500l5-2 2 2 5-.5 1.500 5-2 8h-12z" fill="#f0e000"/><path d="M-8 1q4-3 17-2.500 1.500 0 1 2l-2 5.500q-7 .5-14 2z" fill="url(#gYel)" stroke="#c8b000" stroke-width=".5"/></svg>
<svg style="left:1654.5px;top:370.3px" width="26" height="26" viewBox="-13 -13 26 26"><path d="M7 6l4-2v3z" fill="#bbb"/><rect x="-9" y="-8" width="17" height="16" rx="1" fill="url(#gSave)"/><rect x="-6" y="-7" width="11" height="7" fill="#e8ecf2"/><rect x="-5" y="2.500" width="8" height="5.500" fill="#d8dce4"/><rect x="-3.500" y="3.500" width="2.500" height="4" fill="#1848c0"/></svg>
<svg style="left:1690.5px;top:370.3px" width="26" height="26" viewBox="-13 -13 26 26"><path d="M-9-8l3-1 2 1 3-1 2 2 2 0 1 4 3 3-1 3 3 4-3 2-3-1-2 1-3-1-2 1-3-2 0-4-2-3 1-3-1-3z" fill="#c4a274"/><path d="M-7-6l5 0 3 4 2 5 3 5" fill="none" stroke="#a08050" stroke-width=".8"/><path d="M4 8l6-1 1 2-6 1z" fill="#aaa" opacity=".5"/></svg>
<svg style="left:1725.0px;top:370.3px" width="26" height="26" viewBox="-13 -13 26 26"><path d="M-10 4l10-5 10 5-10 5z" fill="#b01010"/><path d="M-10 4l10 5v2l-10-5z M0 9l10-5v2l-10 5z" fill="#800808"/><path d="M-3 1h6v3h2.500l-5.500 4-5.500-4h2.500z" fill="#f8d820"/><path d="M-10-5l10-5 10 5-10 5z" fill="#9898e8" opacity=".92"/></svg>
<svg style="left:1759.5px;top:370.3px" width="26" height="26" viewBox="-13 -13 26 26"><path d="M-7.500-10h10l5 4v16h-15z" fill="url(#gDoc)"/><g transform="translate(0,1) scale(.95)"><circle cx="0" cy="-2" r="5.200" fill="#ffd040"/><circle cx="-1" cy="-3.500" r="2.600" fill="#fff8c8"/><path d="M-2.500 2.500h5l-.5 3h-4z" fill="#e89020"/><rect x="-2" y="5.500" width="4" height="2.500" fill="#402000"/></g></svg>
<svg style="left:1795.0px;top:370.3px" width="26" height="26" viewBox="-13 -13 26 26"><rect x="-9" y="-9" width="18" height="18" fill="#000"/><g transform="scale(.55)"><circle cx="-5.500" cy="-9" r="2.600" fill="#c0c0c0"/><circle cx="5.500" cy="-9" r="2.600" fill="#c0c0c0"/><circle cx="0" cy="-5" r="6" fill="#c0c0c0"/><ellipse cx="0" cy="5" rx="9" ry="9.500" fill="#c0c0c0"/><ellipse cx="0" cy="7" rx="5" ry="5.500" fill="#888"/><circle cx="-6" cy="12" r="3" fill="#c0c0c0"/><circle cx="6" cy="12" r="3" fill="#c0c0c0"/><ellipse cx="0" cy="-3.500" rx="2.500" ry="2" fill="#888"/></g><text x="4.500" y="-2" font-family="Liberation Sans,sans-serif" font-weight="bold" font-size="5.500" fill="#eee">T</text></svg>
<svg style="left:1829.0px;top:370.3px" width="26" height="26" viewBox="-13 -13 26 26"><path d="M-6.500-5h13l-1.500 12q-5 2.500-10 0z" fill="#4890f0"/><path d="M-3-4l-1 11q2 1 3 1z" fill="#88c0ff" opacity=".8"/><ellipse cx="0" cy="-5" rx="6.800" ry="2.600" fill="#a8d0ff" stroke="#2868d0" stroke-width=".8"/><path d="M-2-5.500l2-1 2 1" fill="none" stroke="#fff" stroke-width=".8"/></svg>
<svg style="left:1863.7px;top:370.3px" width="26" height="26" viewBox="-13 -13 26 26"><rect x="-11" y="-11" width="22" height="22" fill="#f4f4f4" stroke="#999" stroke-width=".8"/><path d="M-11 11v-22h22" fill="none" stroke="#777" stroke-width="1"/><g transform="translate(-4,2) scale(1.150)"><circle cx="0" cy="-2" r="5.200" fill="#ffd040"/><circle cx="-1" cy="-3.500" r="2.600" fill="#fff8c8"/><path d="M-2.500 2.500h5l-.5 3h-4z" fill="#e89020"/><rect x="-2" y="5.500" width="4" height="2.500" fill="#402000"/></g><g transform="translate(4,-2) scale(1.150)"><circle cx="0" cy="-2" r="5.200" fill="#ffd040"/><circle cx="-1" cy="-3.500" r="2.600" fill="#fff8c8"/><path d="M-2.500 2.500h5l-.5 3h-4z" fill="#e89020"/><rect x="-2" y="5.500" width="4" height="2.500" fill="#402000"/></g></svg>
<div class="a" style="left:1590px;top:400.3px;width:303px;height:32px;background:#d6d6d6"></div>
<svg style="left:1601.0px;top:404.0px" width="26" height="26" viewBox="-13 -13 26 26"><path d="M-9 2q2-9 10-8 8 2 10 11l-5 2q-2-8-8-8z" fill="#8890d0"/><path d="M-11 0q3-11 12-10 9 2 11 13l-4 1q-2-10-9-10-6 0-8 7z" fill="#e0c060" stroke="#b09030" stroke-width=".6"/><path d="M-8.500 3v9M-13 7.500h9" stroke="#000" stroke-width="1.400"/></svg>
<svg style="left:1636px;top:411.500px" width="6" height="11" viewBox="0 0 6 11"><path d="M0 0l5.500 5.500L0 11z" fill="#000"/></svg>
<div class="t " style="left:1649px;top:409.80px;font-size:15px;">Relief Layer 1</div>
<div class="a" style="left:1866.5px;top:405px;width:21px;height:22px;background:#e4e4e4;border:1px solid;border-color:#fff #8a8a8a #8a8a8a #fff"></div>
<svg style="left:1864.0px;top:403.0px" width="26" height="26" viewBox="-13 -13 26 26"><g transform="translate(0,.5) scale(1.250)"><circle cx="0" cy="-2" r="5.200" fill="#ffd040"/><circle cx="-1" cy="-3.500" r="2.600" fill="#fff8c8"/><path d="M-2.500 2.500h5l-.5 3h-4z" fill="#e89020"/><rect x="-2" y="5.500" width="4" height="2.500" fill="#402000"/></g></svg>
<svg style="left:1852px;top:436.5px" width="15" height="15" viewBox="0 0 15 15"><rect x=".5" y=".5" width="14" height="14" rx="2" fill="#1a50c0" stroke="#0a2478"/><path d="M1.500 13.500v-12h12" fill="none" stroke="#5a90f0" stroke-width="1"/><path d="M7.500 12v-8M3.800 7.300l3.700-3.700 3.700 3.700" fill="none" stroke="#fff" stroke-width="1.900"/></svg>
<svg style="left:1874.5px;top:436.5px" width="15" height="15" viewBox="0 0 15 15"><rect x=".5" y=".5" width="14" height="14" rx="2" fill="#1a50c0" stroke="#0a2478"/><path d="M1.500 13.500v-12h12" fill="none" stroke="#5a90f0" stroke-width="1"/><path d="M7.500 3.500v8M3.800 8.200l3.700 3.700 3.700-3.700" fill="none" stroke="#fff" stroke-width="1.900"/></svg>
<svg style="left:1581px;top:1021px" width="339" height="33"><rect width="339" height="33" fill="#d6d6d6"/><rect width="339" height="33" filter="url(#nz)" opacity=".6"/></svg>
<div class="a" style="left:1641.5px;top:1021px;width:279px;height:1.2px;background:#a8a8a8"></div>
<div class="a" style="left:1581px;top:1021px;width:60.8px;height:32px;background:#f0f0f0;border-radius:0 0 8px 4px;border-right:1px solid #c4c4c4;border-bottom:1px solid #b8b8b8"></div>
<div class="a" style="left:1642px;top:1022px;width:59.5px;height:30.5px;background:#f0f0f0;border:1px solid #bdbdbd;border-top:0;border-radius:0 0 7px 7px"></div>
<div class="t " style="left:1591.4px;top:1028.27px;font-size:14.8px;color:#111;letter-spacing:-.6px">Layers</div>
<div class="t " style="left:1651.2px;top:1028.47px;font-size:14.8px;color:#111">Add In</div>
<div class="a" style="left:0px;top:1053.8px;width:339px;height:1.4px;background:#a4a4a4"></div>
<div class="a" style="left:1575px;top:1053.8px;width:345px;height:1.4px;background:#a4a4a4"></div>
<div class="a" style="left:345px;top:1054.3px;width:1229px;height:1.2px;background:#fbfbfb"></div>
<div class="a" style="left:1491px;top:1058.8px;width:82px;height:24px;border:1px solid;border-color:#a8a8a8 #fff #fff #a8a8a8"></div>
<div class="a" style="left:1577px;top:1058.8px;width:82.5px;height:24px;border:1px solid;border-color:#a8a8a8 #fff #fff #a8a8a8"></div>
<div class="a" style="left:1663px;top:1058.8px;width:76.5px;height:24px;border:1px solid;border-color:#a8a8a8 #fff #fff #a8a8a8"></div>
<div class="a" style="left:1742.5px;top:1058.8px;width:88px;height:24px;border:1px solid;border-color:#a8a8a8 #fff #fff #a8a8a8"></div>
<div class="a" style="left:1833px;top:1058.8px;width:85px;height:24px;border:1px solid;border-color:#a8a8a8 #fff #fff #a8a8a8"></div>
<div class="t " style="left:1494px;top:1061.65px;font-size:15.3px;color:#222;transform:scaleX(.865);transform-origin:0 0">X: 1667.993</div>
<div class="t " style="left:1579.5px;top:1061.65px;font-size:15.3px;color:#222;transform:scaleX(.865);transform-origin:0 0">Y: 2167.658</div>
<div class="a" style="left:1919px;top:29.5px;width:1px;height:1051px;background:#4c4c4c"></div>
</body></html>
